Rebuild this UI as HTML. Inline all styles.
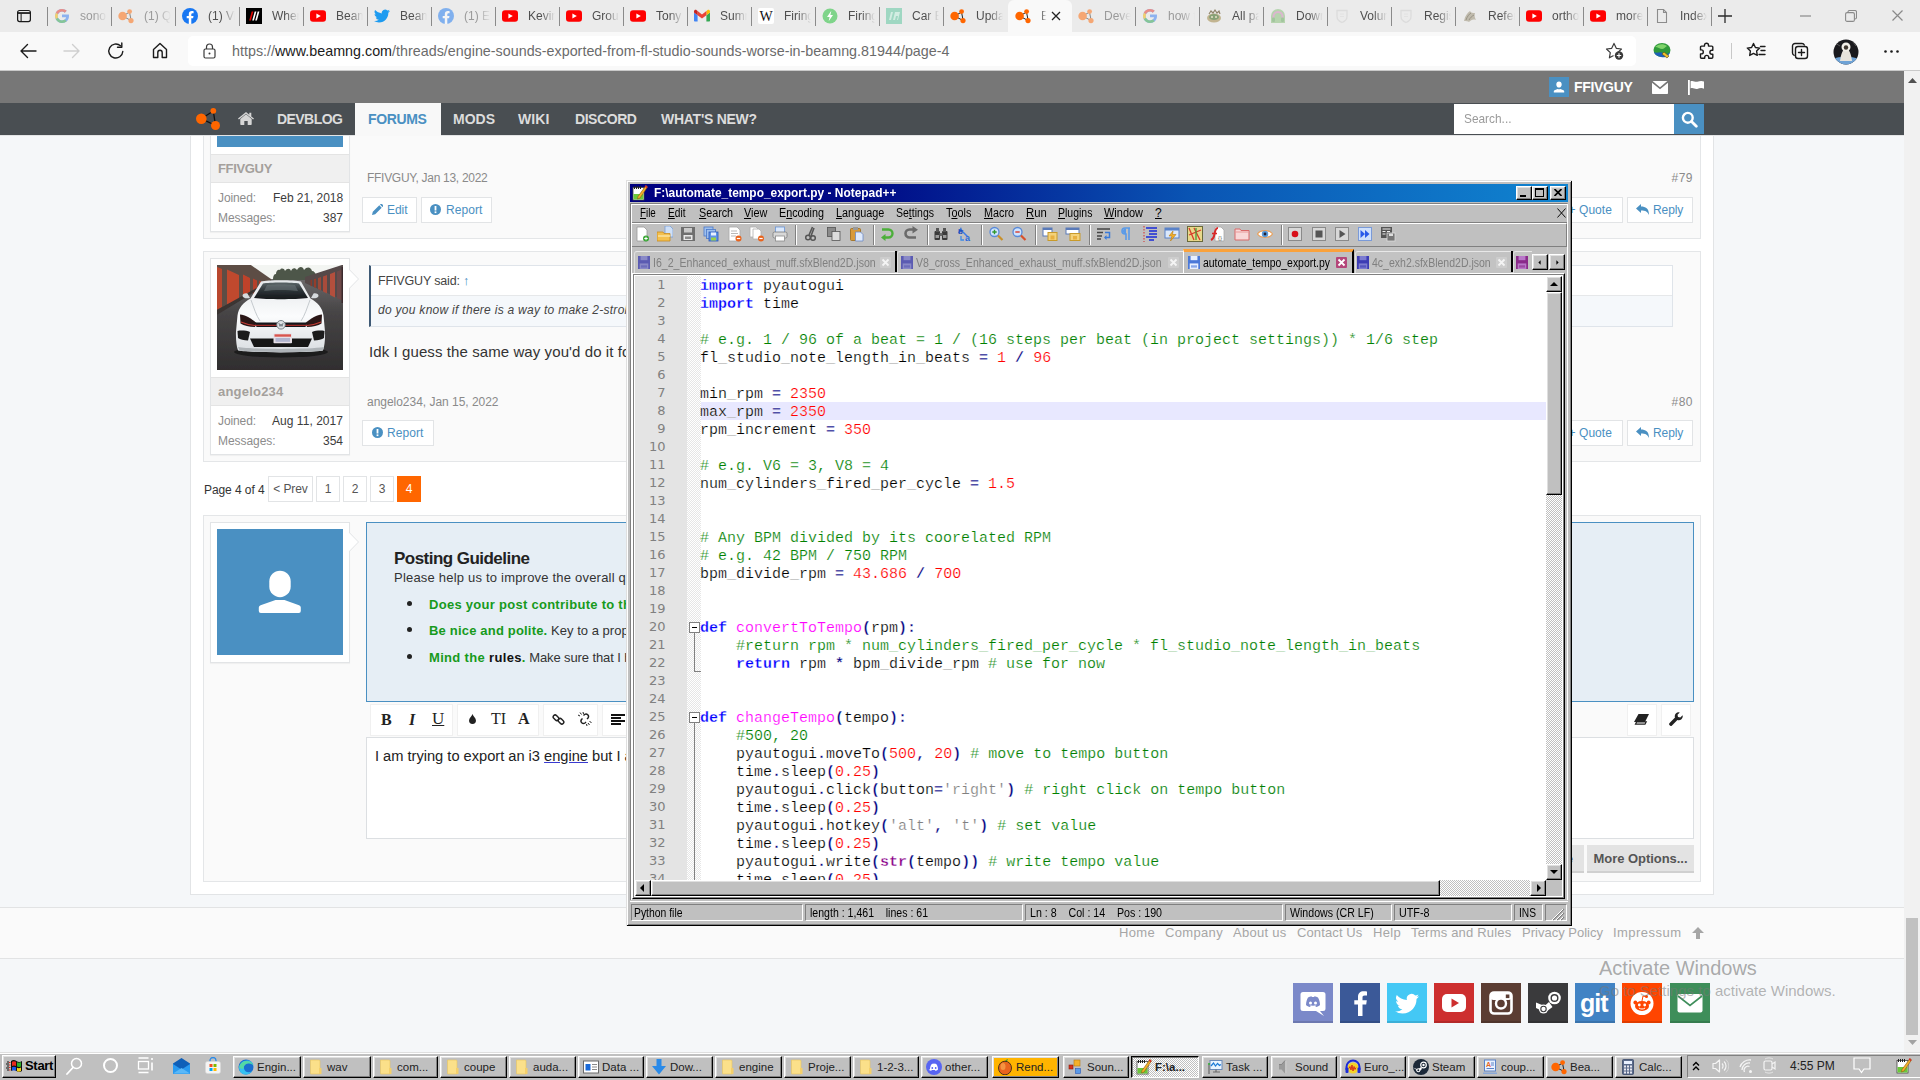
<!DOCTYPE html>
<html lang="en">
<head>
<meta charset="utf-8">
<title>Engine sounds exported from FL Studio sounds worse in BeamNG</title>
<style>
*{box-sizing:border-box}
html,body{margin:0;padding:0}
body{width:1920px;height:1080px;overflow:hidden;position:relative;background:#f6f7f8;font-family:"Liberation Sans",sans-serif;font-size:13px;color:#222}
.abs{position:absolute}
svg{display:block}
i{display:block;font-style:normal}
.t{white-space:nowrap}
/* ---------- browser chrome ---------- */
#tabbar{position:absolute;left:0;top:0;width:1920px;height:32px;background:#ebebeb;z-index:5}
#tabbar .tab{position:absolute;top:0;height:32px;width:64px;font-size:12px;color:#4f4f4f;white-space:nowrap;overflow:hidden}
#tabbar .tab .ic{position:absolute;left:7px;top:8px;width:16px;height:16px}
#tabbar .tab .tt{position:absolute;left:33px;top:7px;width:27px;overflow:hidden;line-height:18px;-webkit-mask-image:linear-gradient(90deg,#000 50%,transparent 100%);mask-image:linear-gradient(90deg,#000 50%,transparent 100%)}
#tabbar .sep{position:absolute;top:7px;width:1px;height:19px;background:#8a8a8a}
#tabbar .active{background:#f9f9f9;border-radius:6px 6px 0 0}
#addr{position:absolute;left:0;top:32px;width:1920px;height:39px;background:#f9f9f9;border-bottom:1px solid #c9c9c9;z-index:5}
#url{position:absolute;left:188px;top:4px;width:1448px;height:30px;background:#fff;border-radius:5px;font-size:14.300px;line-height:30px;color:#6b6b6b;white-space:nowrap}
#url b{font-weight:normal;color:#1b1b1b}
/* ---------- page ---------- */
#page{position:absolute;left:0;top:0;width:1904px;height:1052px;overflow:hidden;background:#f5f7f9}
#vscroll{position:absolute;left:1904px;top:71px;width:16px;height:981px;background:#f1f1f1}
.nv{top:109px;font-weight:bold;font-size:14px;line-height:20px;color:#dcdcdc;white-space:nowrap}
.post{background:#fafafa;border:1px solid #e4e6e8}
.ubox{background:#fff;border:1px solid #e2e4e6;box-shadow:0 1px 1px rgba(0,0,0,.04)}
.uname{background:#f0f0f0;border-top:1px solid #e4e4e4;border-bottom:1px solid #e4e4e4}
.un{font-weight:bold;font-size:13px;line-height:18px;color:#a4a09c;margin-top:1px}
.ul{font-size:12px;line-height:18px;color:#8c8c8c;margin-top:1px}
.uv{font-size:12px;line-height:18px;color:#3c3c3c;margin-top:1px}
.meta{font-size:12px;line-height:18px;color:#8a8a8a;margin-top:1px}
.btn{height:26px;background:#fff;border:1px solid #e2e4e6}
.bt{font-size:12px;line-height:18px;color:#4a90c2}
.arrow{width:9px;height:18px;background:linear-gradient(#fff,#fff);clip-path:polygon(0 0,100% 50%,0 100%)}
.pn{top:476px;height:26px;background:#fff;border:1px solid #e2e4e6;font-size:12px;line-height:24px;color:#555;text-align:center}
.dot{width:5px;height:5px;border-radius:50%;background:#222}
.gl{font-size:13px;line-height:18px;color:#333}
.gl b{color:#179a1c}
.tbg{top:704px;height:32px;background:#fff;border:1px solid #f0f0f0}
.ser{font-family:"Liberation Serif",serif;font-size:17px;line-height:20px;color:#222}
.gbtn{height:28px;background:#e3e3e3;border-bottom:2px solid #d0d0d0;font-family:"Liberation Sans",sans-serif;font-weight:bold;font-size:13px;line-height:27px;color:#555;text-align:center}
.ft{top:924px;font-size:13px;line-height:18px;color:#a6a6a6}
.soc{top:983px;width:40px;height:40px;overflow:hidden;box-shadow:inset 0 -2px 0 rgba(0,0,0,.12)}

#npp{position:absolute;left:626px;top:180px;width:946px;height:746px;background:#c0c0c0;box-shadow:inset 1px 1px 0 #dfdfdf,inset -1px -1px 0 #000,inset 2px 2px 0 #fff,inset -2px -2px 0 #808080;z-index:4;font-family:"Liberation Sans",sans-serif}
.w95b{background:#c0c0c0;border:1px solid;border-color:#fff #000 #000 #fff;box-shadow:inset -1px -1px 0 #808080,inset 1px 1px 0 #dfdfdf}
.mn{top:2px;font-size:12px;line-height:15px;color:#000}
.itab{height:22px;background:#c3c3c3;border-top:1px solid #e8e8e8;border-left:1px solid #e0e0e0;border-radius:3px 0 0 0}
.tbt{font-size:12px;line-height:16px;margin-top:1px;color:#808080}
#ned{border:1px solid;border-color:#fff #000 #000 #fff;box-shadow:inset 1px 1px 0 #808080,inset -1px -1px 0 #808080,inset 2px 2px 0 #fff,inset -2px -2px 0 #fff;background:#fff;overflow:hidden}
#nedc{left:2px;top:2px;width:911px;height:604px;overflow:hidden;background:#fff}
#foldm{background:#f2f2f2;background-image:conic-gradient(#fff 25%,#e6e6e6 0 50%,#fff 0 75%,#e6e6e6 0);background-size:2px 2px}
.ln{left:0;width:30.500px;text-align:right;font-family:"DejaVu Sans",sans-serif;font-size:13px;line-height:18px;color:#808080}
.cd{left:65px;margin-top:2px;-webkit-text-stroke:.22px #fff;font-family:"Liberation Mono",monospace;font-size:15px;line-height:18px;color:#000;white-space:pre}
.cd .k{color:#0000ff;font-weight:bold;-webkit-text-stroke:.3px #fff}
.cd .n{color:#ff0000}
.cd .c{color:#008000}
.cd .o{color:#000080;font-weight:bold;-webkit-text-stroke:.3px #fff}
.cd .f{color:#ff00ff}
.cd .s{color:#808080}
.cd .b{color:#880088;font-weight:bold;-webkit-text-stroke:.3px #fff}
.chk{background-color:#fff;background-image:conic-gradient(#c0c0c0 25%,#fff 0 50%,#c0c0c0 0 75%,#fff 0);background-size:2px 2px}
.sbp .t{white-space:pre}
.sbp{height:17px;border:1px solid;border-color:#808080 #fff #fff #808080;font-size:12px;line-height:16px;color:#000;padding-left:2px;white-space:pre;overflow:hidden}

#taskbar{position:absolute;left:0;top:1052px;width:1920px;height:28px;background:#c0c0c0;border-top:1px solid #dfdfdf;box-shadow:inset 0 1px 0 #fff;z-index:6;font-family:"Liberation Sans",sans-serif}
#taskbar>*{margin-top:-1px}
.tb{top:4px;height:22px;background:#c0c0c0;border:1px solid;border-color:#fff #000 #000 #fff;box-shadow:inset -1px -1px 0 #808080,inset 1px 1px 0 #dfdfdf;font-size:11.500px;line-height:16px;color:#222;overflow:hidden}
.tbp{border-color:#000 #fff #fff #000;box-shadow:inset 1px 1px 0 #808080;background-color:#fff;background-image:conic-gradient(#c0c0c0 25%,#fff 0 50%,#c0c0c0 0 75%,#fff 0);background-size:2px 2px;font-weight:bold}
#t_un1{letter-spacing:-0.335px}
#t_j1{letter-spacing:-0.100px}
#t_jv1{letter-spacing:-0.061px}
#t_m1{letter-spacing:-0.059px}
#t_mv1{letter-spacing:-0.010px}
#t_meta1{letter-spacing:-0.286px}
#t_edit{letter-spacing:-0.047px}
#t_rep1{letter-spacing:0.078px}
#t_un2{letter-spacing:0.212px}
#t_j2{letter-spacing:-0.100px}
#t_jv2{letter-spacing:0.040px}
#t_m2{letter-spacing:-0.059px}
#t_mv2{letter-spacing:-0.010px}
#t_meta2{letter-spacing:-0.027px}
#t_rep2{letter-spacing:0.078px}
#t_pg{letter-spacing:-0.081px}
#t_prev{letter-spacing:-0.086px}
#t_dev{letter-spacing:-0.562px}
#t_for{letter-spacing:-0.362px}
#t_mods{letter-spacing:0.000px}
#t_wiki{letter-spacing:0.073px}
#t_disc{letter-spacing:-0.438px}
#t_new{letter-spacing:-0.265px}
#t_user{letter-spacing:-0.310px}
#mn0{display:inline-block;transform:scaleX(0.8168);transform-origin:0 0}
#mn1{display:inline-block;transform:scaleX(0.8459);transform-origin:0 0}
#mn2{display:inline-block;transform:scaleX(0.8966);transform-origin:0 0}
#mn3{display:inline-block;transform:scaleX(0.9032);transform-origin:0 0}
#mn4{display:inline-block;transform:scaleX(0.8992);transform-origin:0 0}
#mn5{display:inline-block;transform:scaleX(0.9047);transform-origin:0 0}
#mn6{display:inline-block;transform:scaleX(0.8764);transform-origin:0 0}
#mn7{display:inline-block;transform:scaleX(0.9031);transform-origin:0 0}
#mn8{display:inline-block;transform:scaleX(0.8997);transform-origin:0 0}
#mn9{display:inline-block;transform:scaleX(0.9402);transform-origin:0 0}
#mn10{display:inline-block;transform:scaleX(0.8740);transform-origin:0 0}
#mn11{display:inline-block;transform:scaleX(0.9136);transform-origin:0 0}
#sb0{display:inline-block;transform:scaleX(0.8653);transform-origin:0 0}
#sb1{display:inline-block;transform:scaleX(0.8800);transform-origin:0 0}
#sb2{display:inline-block;transform:scaleX(0.8873);transform-origin:0 0}
#sb3{display:inline-block;transform:scaleX(0.8840);transform-origin:0 0}
#sb4{display:inline-block;transform:scaleX(0.8971);transform-origin:0 0}
#sb5{display:inline-block;transform:scaleX(0.8493);transform-origin:0 0}
#t_tab1{display:inline-block;transform:scaleX(0.8815);transform-origin:0 0}
#t_tab2{display:inline-block;transform:scaleX(0.8794);transform-origin:0 0}
#t_tab3{display:inline-block;transform:scaleX(0.8693);transform-origin:0 0}
#t_tab4{display:inline-block;transform:scaleX(0.8765);transform-origin:0 0}
#t_title{display:inline-block;transform:scaleX(0.9168);transform-origin:0 0}
#t_f1{letter-spacing:0.328px}
#t_f2{letter-spacing:0.337px}
#t_f3{letter-spacing:0.271px}
#t_f4{letter-spacing:0.119px}
#t_f5{letter-spacing:0.312px}
#t_f6{letter-spacing:0.197px}
#t_f7{letter-spacing:0.006px}
#t_f8{letter-spacing:0.467px}
#t_pgl{letter-spacing:-0.536px}
#t_pls{letter-spacing:0.205px}
#t_body{letter-spacing:0.088px}
#t_ed{letter-spacing:-0.014px}
#t_g1 b{letter-spacing:0.279px}
#t_g2 b{letter-spacing:0.186px}
#t_g3 b{letter-spacing:0.331px}
#t_g2{letter-spacing:0.022px}
#t_g3{letter-spacing:-0.107px}
#t_said{letter-spacing:-0.156px}
#t_qt{letter-spacing:0.284px}
#t_search{display:inline-block;transform:scaleX(0.8791);transform-origin:0 0}
#t_n79{letter-spacing:0.456px}
#t_n80{letter-spacing:0.456px}
#t_r1{letter-spacing:-0.077px}
#t_r2{letter-spacing:-0.077px}
#t_q1{letter-spacing:0.067px}
#t_q2{letter-spacing:0.067px}
#t_more{letter-spacing:-0.042px}
#urltxt{letter-spacing:0.014px}
</style>
</head>
<body>
<!-- ================= WEB PAGE ================= -->
<div id="page">
<!-- content wrapper -->
<div class="abs" style="left:190px;top:136px;width:1524px;height:759px;background:#fff;border:1px solid #e2e4e6;border-top:0"></div>

<!-- ===== post #79 (top part scrolled away) ===== -->
<div class="abs post" style="left:203px;top:100px;width:1498px;height:139px"></div>
<div class="abs ubox" style="left:210px;top:100px;width:140px;height:132px"></div>
<div class="abs" style="left:217px;top:136px;width:126px;height:11px;background:#4a90c2"></div>
<div class="abs uname" style="left:211px;top:154px;width:138px;height:29px"></div>
<div class="abs t un" id="t_un1" style="left:218px;top:159px">FFIVGUY</div>
<div class="abs t ul" id="t_j1" style="left:218px;top:188px">Joined:</div>
<div class="abs t uv" id="t_jv1" style="right:1561px;top:188px">Feb 21, 2018</div>
<div class="abs t ul" id="t_m1" style="left:218px;top:208px">Messages:</div>
<div class="abs t uv" id="t_mv1" style="right:1561px;top:208px">387</div>
<div class="abs t meta" id="t_meta1" style="left:367px;top:168px">FFIVGUY, Jan 13, 2022</div>
<div class="abs t meta" id="t_n79" style="right:211px;top:168px">#79</div>
<div class="abs btn" style="left:362px;top:197px;width:55px"></div>
<svg class="abs" style="left:372px;top:204px" width="11" height="11" viewBox="0 0 11 11"><path d="M0 11l.8-3.200L7.300 1.300l2.400 2.400L3.200 10.200zM8 .6L8.600 0c.5-.4 1-.3 1.400.1l.9.900c.4.400.5.900.1 1.400l-.6.600z" fill="#4a90c2"/></svg>
<div class="abs t bt" id="t_edit" style="left:387px;top:201px">Edit</div>
<div class="abs btn" style="left:421px;top:197px;width:71px"></div>
<svg class="abs" style="left:430px;top:204px" width="11" height="11" viewBox="0 0 11 11"><circle cx="5.500" cy="5.500" r="5.500" fill="#4a90c2"/><rect x="4.600" y="2" width="1.800" height="4.500" fill="#fff"/><rect x="4.600" y="7.400" width="1.800" height="1.700" fill="#fff"/></svg>
<div class="abs t bt" id="t_rep1" style="left:446px;top:201px">Report</div>
<div class="abs btn" style="left:1558px;top:197px;width:65px"></div>
<div class="abs t bt" id="t_q1" style="left:1568.500px;top:201px">+ Quote</div>
<div class="abs btn" style="left:1627px;top:197px;width:66px"></div>
<svg class="abs rp" style="left:1636px;top:204px" width="13" height="11" viewBox="0 0 13 11"><path d="M5 0v2.600c4.500 0 8 1.800 8 8.400-1.300-3.200-3.500-4.500-8-4.500V9L0 4.500z" fill="#4a90c2"/></svg>
<div class="abs t bt" id="t_r1" style="left:1653px;top:201px">Reply</div>

<!-- ===== post #80 ===== -->
<div class="abs post" style="left:203px;top:251px;width:1498px;height:211px"></div>
<div class="abs ubox" style="left:210px;top:258px;width:140px;height:197px"></div>
<svg class="abs" style="left:348px;top:269px" width="12" height="20" viewBox="0 0 12 20"><path d="M1 0v.5l9.500 9.500L1 19.500v.5z" fill="#fff"/><path d="M1.500 0v.8l9 9.200-9 9.200v.8" fill="none" stroke="#e2e4e6" stroke-width="1"/></svg>
<!-- avatar: white hatchback between red storage units -->
<svg class="abs" style="left:217px;top:265px" width="126" height="105" viewBox="0 0 126 105">
 <defs>
  <linearGradient id="asp" x1="0" y1="0" x2="0" y2="1"><stop offset="0" stop-color="#6a6869"/><stop offset=".35" stop-color="#474546"/><stop offset="1" stop-color="#2f2d2e"/></linearGradient>
  <linearGradient id="hood" x1="0" y1="0" x2="0" y2="1"><stop offset="0" stop-color="#e4e7ea"/><stop offset=".5" stop-color="#fbfcfd"/><stop offset="1" stop-color="#d9dde1"/></linearGradient>
  <linearGradient id="ws" x1="0" y1="0" x2="0" y2="1"><stop offset="0" stop-color="#5a6468"/><stop offset=".5" stop-color="#2c3236"/><stop offset="1" stop-color="#15181b"/></linearGradient>
  <filter id="bl" x="-5%" y="-5%" width="110%" height="110%"><feGaussianBlur stdDeviation=".55"/></filter>
  <clipPath id="avclip"><rect width="126" height="105"/></clipPath>
 </defs>
 <g clip-path="url(#avclip)"><g filter="url(#bl)">
 <rect x="-2" y="-2" width="130" height="109" fill="#f3f5f2"/>
 <rect x="-2" y="14" width="130" height="93" fill="url(#asp)"/>
 <!-- trees -->
 <path d="M56 14c0-3 1-5 3-5 0-3 2-5 4-4 1-2 4-2 5 1 2-3 5-3 6 0 1-3 4-4 6-1 2-4 6-4 7 0 3-4 7-3 8 1 2 0 4 2 4 5v4H56z" fill="#4e5748"/>
 <!-- left units -->
 <path d="M-2 -2H31L54 14v2L-2 49z" fill="#5d4e45"/>
 <path d="M-2 1L5 4V42L-2 46z" fill="#b9462e"/>
 <path d="M10 4.500L22 10V35.500L10 41z" fill="#c0492f"/>
 <path d="M26 9.500L33 13V30L26 33.500z" fill="#bf432b"/>
 <path d="M36 13.500L40 15.500V27L36 29z" fill="#b5412b"/>
 <path d="M42 15.500L45 17V24.500L42 26z" fill="#a83f2b"/>
 <path d="M47 17L49.500 18V22.500L47 23.500z" fill="#9a3d2b"/>
 <path d="M-2 46L54 15v2L-2 51z" fill="#3a3433"/>
 <!-- right units -->
 <path d="M128 -1L88 12v6l40 18z" fill="#54484a"/>
 <path d="M126 4L120 6.500V33L126 36z" fill="#6e4a48"/><path d="M124.500 2v36h2V2z" fill="#3a2c2e"/>
 <path d="M118 7L113 9V30L118 32.500z" fill="#b4503c"/>
 <path d="M110 10L106 11.500V26.500L110 28.500z" fill="#a84c3a"/>
 <path d="M104 12L101 13V24L104 25.500z" fill="#9a4838"/>
 <path d="M99 13.500L97 14.300V22L99 23z" fill="#963c2b"/>
 <path d="M95 14.500L93.500 15V20.500L95 21.200z" fill="#8a3a2a"/>
 <!-- car shadow -->
 <ellipse cx="64" cy="87" rx="47" ry="5.500" fill="#1c1b1c"/>
 <!-- body -->
 <path d="M44 16.500c6-1.600 34-1.600 40 0l9.500 17c7 4 12 9 13 17l1.500 16c.3 8-.5 15-2 19-14 2.500-71 2.500-85 0-1.500-4-2.300-11-2-19l1.500-16c1-8 6-13 13-17z" fill="url(#hood)"/>
 <path d="M46 18.500c6-1.300 30-1.300 36 0l9 14.500c-14 1.600-40 1.600-54 0z" fill="url(#ws)"/>
 <path d="M50 20c8-1 20-1 28 0l3 6c-10-1.500-24-1.500-34 0z" fill="#6e787c" opacity=".55"/>
 <!-- mirrors -->
 <path d="M25.500 31c0-2 2-3 5-2.500l2.500 4.500c-3 .8-7 .3-7.500-2z" fill="#d6dadd"/>
 <path d="M101.500 31c0-2-2-3-5-2.500L94 33c3 .8 7 .3 7.500-2z" fill="#d6dadd"/>
 <!-- hood creases -->
 <path d="M34 35c3 8 5 15 9 21M93 35c-3 8-5 15-9 21" fill="none" stroke="#c5cace" stroke-width="1"/>
 <!-- headlights -->
 <path d="M23 49.500c5 .5 11 3.500 16.500 8.500L38 62c-6-.3-11-1.300-14.500-3.500z" fill="#2a1718"/>
 <path d="M105 49.500c-5 .5-11 3.500-16.500 8.500L90 62c6-.3 11-1.300 14.500-3.500z" fill="#2a1718"/>
 <path d="M24 57c4 1.800 9 3 14 3.500M104 57c-4 1.800-9 3-14 3.500" fill="none" stroke="#c03a33" stroke-width="1.200"/>
 <!-- grille -->
 <path d="M38 57.500h52l-1.500 4.500h-49z" fill="#17181a"/>
 <path d="M38 60.300h52" stroke="#c4312c" stroke-width="1"/>
 <circle cx="64" cy="59.800" r="4.300" fill="#dfe3e6" stroke="#6e767c" stroke-width=".9"/>
 <path d="M61.800 57.800l1.200 3.600 1-2.400 1 2.400 1.200-3.600" fill="none" stroke="#5d666d" stroke-width=".8"/>
 <!-- intakes -->
 <path d="M20.500 66c4-.8 9-.3 12.500 1l-2 8.500c-4 0-8-1-10-2.500z" fill="#1b1b1d"/>
 <path d="M107.500 66c-4-.8-9-.3-12.500 1l2 8.500c4 0 8-1 10-2.500z" fill="#1b1b1d"/>
 <path d="M33 73.500h62l-4 8.500H37z" fill="#151617"/>
 <!-- plate -->
 <rect x="56.500" y="68.500" width="18.500" height="9.800" rx=".8" fill="#e6dfe6"/>
 <rect x="57.500" y="69.300" width="16.500" height="2.400" fill="#d9544d"/>
 <rect x="58.500" y="73" width="14.500" height="3.800" fill="#9aa3c4" opacity=".7"/>
 <!-- splitter -->
 <path d="M21 82c14 2.500 72 2.500 86 0l-1.500 3.500c-14 2.300-69 2.300-83 0z" fill="#aeb3b7"/>
 </g></g>
</svg>
<div class="abs uname" style="left:211px;top:377px;width:138px;height:29px"></div>
<div class="abs t un" id="t_un2" style="left:218px;top:382px">angelo234</div>
<div class="abs t ul" id="t_j2" style="left:218px;top:411px">Joined:</div>
<div class="abs t uv" id="t_jv2" style="right:1561px;top:411px">Aug 11, 2017</div>
<div class="abs t ul" id="t_m2" style="left:218px;top:431px">Messages:</div>
<div class="abs t uv" id="t_mv2" style="right:1561px;top:431px">354</div>
<!-- quote -->
<div class="abs" style="left:369px;top:265px;width:1304px;height:62px;border:1px solid #dfe4ea;border-left:2px solid #3f5a75;background:#f5f8fb"></div>
<div class="abs" style="left:371px;top:266px;width:1301px;height:30px;background:#fff;border-bottom:1px solid #e6e8ea"></div>
<div class="abs t" id="t_said" style="left:378px;top:272px;font-size:12.500px;line-height:18px;color:#444">FFIVGUY said: <span style="color:#4a90c2">↑</span></div>
<div class="abs t" id="t_qt" style="left:378px;top:301px;font-size:12px;line-height:18px;font-style:italic;color:#444">do you know if there is a way to make 2-stroke engine sounds in FL Studio?</div>
<div class="abs t" id="t_body" style="left:369px;top:342px;font-size:15px;line-height:20px;color:#333">Idk I guess the same way you'd do it for a 4-stroke, just change the number of cylinders fired per cycle</div>
<div class="abs t meta" id="t_meta2" style="left:367px;top:392px">angelo234, Jan 15, 2022</div>
<div class="abs t meta" id="t_n80" style="right:211px;top:392px">#80</div>
<div class="abs btn" style="left:362px;top:420px;width:72px"></div>
<svg class="abs" style="left:372px;top:427px" width="11" height="11" viewBox="0 0 11 11"><circle cx="5.500" cy="5.500" r="5.500" fill="#4a90c2"/><rect x="4.600" y="2" width="1.800" height="4.500" fill="#fff"/><rect x="4.600" y="7.400" width="1.800" height="1.700" fill="#fff"/></svg>
<div class="abs t bt" id="t_rep2" style="left:387px;top:424px">Report</div>
<div class="abs btn" style="left:1558px;top:420px;width:65px"></div>
<div class="abs t bt" id="t_q2" style="left:1568.500px;top:424px">+ Quote</div>
<div class="abs btn" style="left:1627px;top:420px;width:66px"></div>
<svg class="abs rp" style="left:1636px;top:427px" width="13" height="11" viewBox="0 0 13 11"><path d="M5 0v2.600c4.500 0 8 1.800 8 8.400-1.300-3.200-3.500-4.500-8-4.500V9L0 4.500z" fill="#4a90c2"/></svg>
<div class="abs t bt" id="t_r2" style="left:1653px;top:424px">Reply</div>

<!-- pagination -->
<div class="abs t" id="t_pg" style="left:204px;top:481px;font-size:12px;line-height:18px;color:#333">Page 4 of 4</div>
<div class="abs pn" style="left:268px;width:45px"><span class="t" id="t_prev">&lt; Prev</span></div>
<div class="abs pn" style="left:316px;width:24px"><span class="t">1</span></div>
<div class="abs pn" style="left:343px;width:24px"><span class="t">2</span></div>
<div class="abs pn" style="left:370px;width:24px"><span class="t">3</span></div>
<div class="abs pn" style="left:397px;width:24px;background:#ff6600;border-color:#ff6600;color:#fff"><span class="t">4</span></div>

<!-- ===== quick reply ===== -->
<div class="abs post" style="left:203px;top:515px;width:1498px;height:367px"></div>
<div class="abs ubox" style="left:210px;top:522px;width:140px;height:141px"></div>
<svg class="abs" style="left:348px;top:532px" width="12" height="20" viewBox="0 0 12 20"><path d="M1 0v.5l9.500 9.500L1 19.500v.5z" fill="#fff"/><path d="M1.500 0v.8l9 9.200-9 9.200v.8" fill="none" stroke="#e2e4e6" stroke-width="1"/></svg>
<div class="abs" style="left:217px;top:529px;width:126px;height:126px;background:#4a90c2">
 <svg class="abs" style="left:42px;top:42px;overflow:visible" width="43" height="43" viewBox="0 0 43 43"><rect x="10.300" y="-.3" width="21.400" height="26.500" rx="10.700" fill="#fff"/><path d="M16.500 29h9l14.500 5.300c1.200.5 1.800 1.300 1.800 2.500v3.200a2 2 0 0 1-2 2H1.800a2 2 0 0 1-2-2v-3.200c0-1.200.6-2 1.800-2.500z" fill="#fff"/></svg>
</div>
<div class="abs" style="left:366px;top:522px;width:1328px;height:180px;background:#e6eef5;border:1px solid #4a90c2"></div>
<div class="abs t" id="t_pgl" style="left:394px;top:548px;font-size:17px;line-height:22px;font-weight:bold;color:#222">Posting Guideline</div>
<div class="abs t" id="t_pls" style="left:394px;top:569px;font-size:13px;line-height:18px;color:#333">Please help us to improve the overall quality of the forums by following these simple guidelines:</div>
<i class="abs dot" style="left:407px;top:601px"></i>
<i class="abs dot" style="left:407px;top:627px"></i>
<i class="abs dot" style="left:407px;top:654px"></i>
<div class="abs t gl" id="t_g1" style="left:429px;top:596px"><b>Does your post contribute to the discussion?</b> Make sure it adds value to the thread.</div>
<div class="abs t gl" id="t_g2" style="left:429px;top:622px"><b>Be nice and polite.</b> Key to a proper discussion is respect for other members.</div>
<div class="abs t gl" id="t_g3" style="left:429px;top:649px"><b>Mind the <span style="color:#111">rules</span>.</b> Make sure that I have read and understood the forum rules.</div>
<!-- editor toolbar -->
<div class="abs" style="left:366px;top:702px;width:1328px;height:36px;background:#fafafa"></div>
<div class="abs tbg" style="left:370px;width:83px"></div>
<div class="abs tbg" style="left:457px;width:82px"></div>
<div class="abs tbg" style="left:543px;width:55px"></div>
<div class="abs tbg" style="left:602px;width:40px"></div>
<div class="abs tbg" style="left:1627px;width:30px"></div>
<div class="abs tbg" style="left:1661px;width:30px"></div>
<div class="abs t ser" style="left:381px;top:710px;font-weight:bold;font-size:16px">B</div>
<div class="abs t ser" style="left:409px;top:710px;font-style:italic;font-weight:bold;font-size:16px">I</div>
<div class="abs t ser" style="left:432px;top:709px;text-decoration:underline;font-size:17px">U</div>
<svg class="abs" style="left:469px;top:714px" width="7" height="10" viewBox="0 0 9 13"><path d="M4.500 0C5.500 3 9 5.500 9 8.500a4.500 4.500 0 0 1-9 0C0 5.500 3.500 3 4.500 0z" fill="#222"/></svg>
<div class="abs t ser" style="left:491px;top:709px;font-weight:normal;font-size:16px">TI</div>
<div class="abs t ser" style="left:518px;top:709px;font-weight:bold;font-size:16px">A</div>
<svg class="abs" style="left:552px;top:713px" width="13" height="13" viewBox="0 0 15 15"><g fill="none" stroke="#222" stroke-width="1.700"><rect x="1" y="3.300" width="7.200" height="4.400" rx="2.200" transform="rotate(45 4.600 5.500)"/><rect x="6.800" y="7.300" width="7.200" height="4.400" rx="2.200" transform="rotate(45 10.400 9.500)"/></g></svg>
<svg class="abs" style="left:577px;top:711px" width="16" height="16" viewBox="0 0 16 16"><g fill="none" stroke="#222" stroke-width="1.400"><path d="M6.500 4.500l1-1a2.500 2.500 0 0 1 3.500 3.500l-1 1M9 11l-1 1a2.500 2.500 0 0 1-3.500-3.500l1-1"/><path d="M3 1.500l1.500 2M1 4l2 1M12.500 14l-1.500-2M14.500 11.500l-2-1M6 1l.5 2M10 15l-.5-2" stroke-width="1"/></g></svg>
<svg class="abs" style="left:611px;top:714px" width="14" height="11" viewBox="0 0 14 11"><path d="M0 1h14M0 4h10M0 7h14M0 10h10" stroke="#111" stroke-width="1.900"/></svg>
<svg class="abs" style="left:1634px;top:714px" width="15" height="11" viewBox="0 0 15 11"><path d="M4.500 0H15l-4 8H0z" fill="#222"/><path d="M1.500 10.200h9.500l1.200-2.400H2.700z" fill="none" stroke="#222" stroke-width="1.200"/></svg>
<svg class="abs" style="left:1669px;top:712px" width="14" height="14" viewBox="0 0 14 14"><path d="M13.600 3.200l-2.300 2.300-2.300-.5-.5-2.300L10.800.4A4 4 0 0 0 6 5.600L.6 11a1.700 1.700 0 0 0 2.400 2.400L8.400 8a4 4 0 0 0 5.200-4.800z" fill="#222"/></svg>
<!-- editor -->
<div class="abs" style="left:366px;top:737px;width:1328px;height:102px;background:#fff;border:1px solid #dcdfe2"></div>
<div class="abs t" id="t_ed" style="left:375px;top:746px;font-family:'Liberation Sans',sans-serif;font-size:14.670px;line-height:20px;color:#222">I am trying to export an i3 <span style="text-decoration:underline;text-decoration-color:#3a3ad0">engine</span> but I am not sure how to do it properly</div>
<div class="abs gbtn" style="left:1478px;top:845px;width:106px;text-align:right;padding-right:11px"><span class="t">Upload a File</span></div>
<div class="abs gbtn" style="left:1587px;top:845px;width:107px"><span class="t" id="t_more">More Options...</span></div>

<!-- footer -->
<div class="abs" style="left:0;top:907px;width:1904px;height:52px;background:#fafafa;border-top:1px solid #e2e3e4;border-bottom:1px solid #e2e3e4"></div>
<div class="abs t ft" id="t_f1" style="left:1119px">Home</div>
<div class="abs t ft" id="t_f2" style="left:1165px">Company</div>
<div class="abs t ft" id="t_f3" style="left:1233px">About us</div>
<div class="abs t ft" id="t_f4" style="left:1297px">Contact Us</div>
<div class="abs t ft" id="t_f5" style="left:1373px">Help</div>
<div class="abs t ft" id="t_f6" style="left:1411px">Terms and Rules</div>
<div class="abs t ft" id="t_f7" style="left:1522px">Privacy Policy</div>
<div class="abs t ft" id="t_f8" style="left:1613px">Impressum</div>
<svg class="abs" style="left:1692px;top:927px" width="12" height="12" viewBox="0 0 12 12"><path d="M6 0l6 6H8v6H4V6H0z" fill="#a6a6a6"/></svg>

<!-- header strips -->
<div class="abs" style="left:0;top:71px;width:1904px;height:32px;background:#777"></div>
<div class="abs" style="left:0;top:103px;width:1904px;height:32px;background:#494e52"></div>
<div class="abs" style="left:0;top:135px;width:1904px;height:1px;background:#e3e4e5"></div>
<!-- visitor tabs -->
<div class="abs" style="left:1549px;top:77px;width:20px;height:20px;background:#4a90c2">
 <svg class="abs" style="left:4px;top:4px" width="12" height="12" viewBox="0 0 12 12"><path d="M6 .5c1.600 0 2.700 1.200 2.700 2.900S7.500 6.600 6 6.600 3.300 5.100 3.300 3.400 4.400.5 6 .5zM.8 11.500v-1.300c0-.5.200-.8.700-1L4.600 7.900c.9.500 1.900.5 2.800 0l3.100 1.300c.5.200.7.500.7 1v1.300z" fill="#fff"/></svg>
</div>
<div class="abs t" id="t_user" style="left:1574px;top:78px;font-weight:bold;font-size:14px;line-height:18px;color:#fff">FFIVGUY</div>
<svg class="abs" style="left:1652px;top:81px" width="16" height="13" viewBox="0 0 16 13"><path d="M0 1.800V12c0 .6.400 1 1 1h14c.6 0 1-.4 1-1V1.800L8 8.300z" fill="#fff"/><path d="M.6 0h14.800L8 6.300z" fill="#fff"/></svg>
<svg class="abs" style="left:1688px;top:80px" width="16" height="15" viewBox="0 0 16 15"><rect x="0" y="0" width="1.800" height="15" fill="#fff"/><path d="M2.600 1.300c2.200-1.300 4.300.9 6.600.4C11.400 1.200 13.400.3 16 1.500v7.200c-2.600-1.200-4.600-.3-6.800.2-2.300.5-4.400-1.700-6.600-.4z" fill="#fff"/></svg>

<!-- main nav -->
<svg class="abs" style="left:195px;top:107px" width="28" height="25" viewBox="0 0 28 25"><path d="M6.300 11.700L18.300 4 20.500 18.500z" fill="none" stroke="#111" stroke-width="1.300"/><circle cx="6.300" cy="11.700" r="5.300" fill="#ff6600"/><circle cx="18.300" cy="3.800" r="2.900" fill="#ff6600"/><circle cx="20.500" cy="18.500" r="4.500" fill="#ff6600"/></svg>
<svg class="abs" style="left:238px;top:112px" width="16" height="13" viewBox="0 0 16 13"><path d="M8 2.300l5.700 4.700v5.300c0 .4-.3.700-.7.700H9.700V9H6.300v4H3c-.4 0-.7-.3-.7-.7V7z" fill="#d6d6d6"/><path d="M8 0l3.300 2.700V.8h2v3.600L16 6.600l-.9 1L8 1.800.9 7.600l-.9-1z" fill="#d6d6d6"/></svg>
<div class="abs nv" id="t_dev" style="left:277px">DEVBLOG</div>
<div class="abs" style="left:355px;top:103px;width:86px;height:33px;background:#f8f8f8"></div>
<div class="abs nv" id="t_for" style="left:368px;color:#4a90c2">FORUMS</div>
<div class="abs nv" id="t_mods" style="left:453px">MODS</div>
<div class="abs nv" id="t_wiki" style="left:518px">WIKI</div>
<div class="abs nv" id="t_disc" style="left:575px">DISCORD</div>
<div class="abs nv" id="t_new" style="left:661px">WHAT'S NEW?</div>
<div class="abs" style="left:1454px;top:104px;width:220px;height:30px;background:#fff"></div>
<div class="abs t" id="t_search" style="left:1464px;top:110px;font-size:13.500px;line-height:18px;color:#9a9a9a">Search...</div>
<div class="abs" style="left:1674px;top:104px;width:30px;height:30px;background:#4a90c2">
 <svg class="abs" style="left:7px;top:7px" width="17" height="17" viewBox="0 0 17 17"><circle cx="6.800" cy="6.800" r="4.900" fill="none" stroke="#fff" stroke-width="2.400"/><path d="M10.500 10.500l4.800 4.800" stroke="#fff" stroke-width="2.800" stroke-linecap="round"/></svg>
</div>

<!-- social buttons -->
<div class="abs soc" style="left:1293px;background:#7b89c9"><svg width="40" height="40" viewBox="0 0 40 40"><path d="M10 9h20a2.500 2.500 0 0 1 2.500 2.500v14A2.500 2.500 0 0 1 30 28h-3l4 5-8-5H10a2.500 2.500 0 0 1-2.500-2.500v-14A2.500 2.500 0 0 1 10 9z" fill="#fff"/><path d="M13 22c0-3 1-6 2-7.500 1-.8 2.300-1.200 3.500-1.300l.4.800h2.200l.4-.8c1.200.1 2.500.5 3.500 1.300 1 1.500 2 4.500 2 7.500-1 1.200-2.500 1.800-4 2l-.8-1.300c.5-.2 1-.5 1.400-.8-2.300 1-5 1-7.200 0 .4.300.9.600 1.400.8L17 24c-1.500-.2-3-.8-4-2z" fill="#7b89c9"/><circle cx="17.500" cy="20" r="1.500" fill="#fff"/><circle cx="22.500" cy="20" r="1.500" fill="#fff"/></svg></div>
<div class="abs soc" style="left:1340px;background:#3b5998"><svg width="40" height="40" viewBox="0 0 40 40"><path d="M22.500 33V21.500h3.700l.6-4.300h-4.300v-2.700c0-1.300.4-2.100 2.200-2.100H27V8.500c-.4-.1-1.800-.2-3.400-.2-3.300 0-5.600 2-5.600 5.700v3.200h-3.700v4.300H18V33z" fill="#fff"/></svg></div>
<div class="abs soc" style="left:1387px;background:#44c8f5"><svg width="40" height="40" viewBox="0 0 40 40"><path d="M32 13.300c-.9.400-1.800.7-2.800.8 1-.6 1.800-1.600 2.200-2.700-1 .6-2 1-3.100 1.200a4.900 4.900 0 0 0-8.400 4.500c-4.100-.2-7.700-2.200-10.100-5.100a4.900 4.900 0 0 0 1.500 6.500c-.8 0-1.600-.2-2.200-.6 0 2.400 1.700 4.400 3.900 4.800-.7.200-1.500.2-2.200.1.600 1.900 2.400 3.400 4.600 3.400A9.900 9.900 0 0 1 8 28.300a13.900 13.900 0 0 0 7.500 2.200c9 0 14-7.500 14-14v-.6c1-.7 1.800-1.600 2.500-2.600z" fill="#fff"/></svg></div>
<div class="abs soc" style="left:1434px;background:#cd2f2f"><svg width="40" height="40" viewBox="0 0 40 40"><rect x="8" y="11" width="24" height="18" rx="5" fill="#fff"/><path d="M17.500 15.500v9l7.500-4.500z" fill="#cd2f2f"/></svg></div>
<div class="abs soc" style="left:1481px;background:#5b3d33"><svg width="40" height="40" viewBox="0 0 40 40"><rect x="9.500" y="9.500" width="21" height="21" rx="3.500" fill="none" stroke="#fff" stroke-width="2.600"/><rect x="9.500" y="9.500" width="21" height="7.500" rx="3" fill="#fff"/><circle cx="20" cy="20.500" r="5" fill="#5b3d33" stroke="#fff" stroke-width="2.400"/><rect x="24.800" y="11.500" width="3.600" height="3.600" fill="#5b3d33"/></svg></div>
<div class="abs soc" style="left:1528px;background:#3a3a3c"><svg width="40" height="40" viewBox="0 0 40 40"><circle cx="26.500" cy="15" r="6.300" fill="#fff"/><circle cx="26.500" cy="15" r="4" fill="#3a3a3c"/><circle cx="26.500" cy="15" r="2.600" fill="#fff"/><path d="M8 19.500l8.500 3.500 4.500-4 3.500 5-6 4.500-2 .5L8 25z" fill="#fff"/><circle cx="15.500" cy="26" r="4.600" fill="#fff"/><circle cx="15.500" cy="26" r="2.700" fill="none" stroke="#3a3a3c" stroke-width="1.100"/></svg></div>
<div class="abs soc" style="left:1575px;background:#4183c4"><div class="t" style="position:absolute;left:5px;top:6px;font:bold 25px/28px 'Liberation Sans',sans-serif;color:#fff;letter-spacing:-1px">git</div></div>
<div class="abs soc" style="left:1622px;background:#ff4500"><svg width="40" height="40" viewBox="0 0 40 40"><circle cx="20" cy="20.500" r="11.500" fill="#fff"/><ellipse cx="20" cy="23" rx="7" ry="5" fill="#ff4500"/><circle cx="13.300" cy="19.500" r="1.900" fill="#ff4500"/><circle cx="26.700" cy="19.500" r="1.900" fill="#ff4500"/><circle cx="24.500" cy="13.500" r="1.500" fill="#ff4500"/><path d="M20 18l1-5 3.500 .8" fill="none" stroke="#ff4500" stroke-width="1"/><circle cx="17.300" cy="22" r="1.400" fill="#fff"/><circle cx="22.700" cy="22" r="1.400" fill="#fff"/><path d="M17.200 25.200c1.700 1.200 3.900 1.200 5.600 0" fill="none" stroke="#fff" stroke-width="1" stroke-linecap="round"/></svg></div>
<div class="abs soc" style="left:1670px;background:#3e8e5a"><svg width="40" height="40" viewBox="0 0 40 40"><rect x="7.500" y="11" width="25" height="18.500" rx="2" fill="#fff"/><path d="M8 13l12 9.500L32 13" fill="none" stroke="#3e8e5a" stroke-width="1.600"/></svg></div>
<!-- windows watermark -->
<div class="abs t" id="t_aw" style="left:1599px;top:956px;font-family:'Liberation Sans',sans-serif;font-size:20px;line-height:24px;color:rgba(120,120,120,.62)">Activate Windows</div>
<div class="abs t" id="t_aw2" style="left:1599px;top:981px;font-family:'Liberation Sans',sans-serif;font-size:15px;line-height:20px;color:rgba(120,120,120,.55)">Go to Settings to activate Windows.</div>

</div>
<div id="vscroll"><svg class="abs" style="left:4px;top:7px" width="9" height="5" viewBox="0 0 9 5"><path d="M0 5h9L4.500 0z" fill="#505050"/></svg><i class="abs" style="left:2px;top:847px;width:12px;height:117px;background:#c1c1c1"></i><svg class="abs" style="left:4px;top:969px" width="9" height="5" viewBox="0 0 9 5"><path d="M0 0h9L4.500 5z" fill="#a3a3a3"/></svg></div>
<!-- ================= BROWSER TAB STRIP ================= -->
<div id="tabbar">
<svg class="abs" style="left:16px;top:9px" width="16" height="14" viewBox="0 0 18 16"><rect x="1.700" y="1.700" width="14.600" height="12.600" rx="2.300" fill="none" stroke="#1b1b1b" stroke-width="1.400"/><path d="M2 4.600h14" stroke="#1b1b1b" stroke-width="2"/><path d="M5.700 5v9" stroke="#1b1b1b" stroke-width="1.200"/></svg>
<div class="tab" style="left:47px"><span class="ic" style="opacity:0.55"><svg width="16" height="16" viewBox="0 0 16 16" style=""><path d="M8 6.6h6.9c.1.5.1.9.1 1.5 0 4-2.7 6.9-7 6.900A7 7 0 1 1 8 1c1.900 0 3.500.7 4.700 1.800l-2 1.900C10 4 9.100 3.600 8 3.600a4.400 4.400 0 1 0 0 8.800c2.300 0 3.700-1.300 4.100-3.200H8z" fill="#4285f4"/><path d="M1.800 4.700A7 7 0 0 1 8 1c1.900 0 3.500.7 4.700 1.800l-2 1.900C10 4 9.100 3.600 8 3.600c-1.800 0-3.300 1-4 2.600z" fill="#ea4335"/><path d="M1.800 4.700l2.200 1.500a4.400 4.400 0 0 0 0 3.600l-2.200 1.500a7 7 0 0 1 0-6.600z" fill="#fbbc05"/><path d="M1.800 11.300L4 9.800c.7 1.600 2.200 2.600 4 2.600 1.100 0 2-.3 2.700-.8l2.100 1.700A7 7 0 0 1 8 15a7 7 0 0 1-6.200-3.700z" fill="#34a853"/></svg></span><span class="tt" style="color:#9a9a9a">sono</span></div>
<div class="tab" style="left:111px"><span class="ic" style="opacity:0.5"><svg width="16" height="16" viewBox="0 0 16 16" style=""><path d="M4.500 8L11.500 4.200 13.200 12.600z" fill="none" stroke="#222" stroke-width="1"/><circle cx="4.600" cy="8" r="4.300" fill="#ff6600"/><circle cx="11.600" cy="3.600" r="2.400" fill="#ff6600"/><circle cx="13" cy="12.600" r="2.600" fill="#ff6600"/></svg></span><span class="tt" style="color:#9a9a9a">(1) Q</span></div>
<div class="tab" style="left:175px"><span class="ic" style="opacity:1"><svg width="16" height="16" viewBox="0 0 16 16" style=""><circle cx="8" cy="8" r="8" fill="#1877f2"/><path d="M11.100 10.300l.4-2.300H9.300V6.500c0-.6.300-1.200 1.300-1.200h1V3.300s-.9-.2-1.800-.2C8 3.100 6.800 4.200 6.800 6.200V8H4.700v2.300h2.100v5.600a8 8 0 0 0 2.500 0v-5.600z" fill="#fff"/></svg></span><span class="tt" style="">(1) Vi</span></div>
<div class="tab" style="left:239px"><span class="ic" style="opacity:1"><svg width="16" height="16" viewBox="0 0 16 16" style=""><rect width="16" height="16" fill="#000"/><path d="M3.200 12.500L5.700 3.500h1.700L4.900 12.500z" fill="#e10600"/><path d="M6.200 12.500L8.700 3.500h1.700L7.900 12.500zM9.200 12.500L11.700 3.500h1.700L10.900 12.500z" fill="#fff"/></svg></span><span class="tt" style="">Wher</span></div>
<div class="tab" style="left:303px"><span class="ic" style="opacity:1"><svg width="16" height="16" viewBox="0 0 16 16" style=""><rect x="0" y="2.300" width="16" height="11.400" rx="3" fill="#ff0000"/><path d="M6.400 5.500v5l4.400-2.500z" fill="#fff"/></svg></span><span class="tt" style="">Beam</span></div>
<div class="tab" style="left:367px"><span class="ic" style="opacity:1"><svg width="16" height="16" viewBox="0 0 16 16" style=""><path d="M16 3c-.6.300-1.200.5-1.900.5.700-.4 1.200-1 1.400-1.800-.6.400-1.300.6-2.100.8A3.300 3.300 0 0 0 7.800 5.500 9.300 9.300 0 0 1 1.100 2.100a3.300 3.300 0 0 0 1 4.400c-.5 0-1-.2-1.500-.4 0 1.600 1.100 2.900 2.600 3.200-.5.100-1 .2-1.500.1a3.300 3.300 0 0 0 3.100 2.300A6.600 6.600 0 0 1 0 13a9.300 9.300 0 0 0 5 1.500c6 0 9.300-5 9.300-9.300v-.4c.7-.5 1.200-1.100 1.700-1.800z" fill="#1d9bf0"/></svg></span><span class="tt" style="">Beam</span></div>
<div class="tab" style="left:431px"><span class="ic" style="opacity:0.5"><svg width="16" height="16" viewBox="0 0 16 16" style=""><circle cx="8" cy="8" r="8" fill="#1877f2"/><path d="M11.100 10.300l.4-2.300H9.300V6.500c0-.6.300-1.200 1.300-1.200h1V3.300s-.9-.2-1.800-.2C8 3.100 6.800 4.200 6.800 6.200V8H4.700v2.300h2.100v5.600a8 8 0 0 0 2.500 0v-5.600z" fill="#fff"/></svg></span><span class="tt" style="color:#9a9a9a">(1) Ev</span></div>
<div class="tab" style="left:495px"><span class="ic" style="opacity:1"><svg width="16" height="16" viewBox="0 0 16 16" style=""><rect x="0" y="2.300" width="16" height="11.400" rx="3" fill="#ff0000"/><path d="M6.400 5.500v5l4.400-2.500z" fill="#fff"/></svg></span><span class="tt" style="">Kevin</span></div>
<div class="tab" style="left:559px"><span class="ic" style="opacity:1"><svg width="16" height="16" viewBox="0 0 16 16" style=""><rect x="0" y="2.300" width="16" height="11.400" rx="3" fill="#ff0000"/><path d="M6.400 5.500v5l4.400-2.500z" fill="#fff"/></svg></span><span class="tt" style="">Grou</span></div>
<div class="tab" style="left:623px"><span class="ic" style="opacity:1"><svg width="16" height="16" viewBox="0 0 16 16" style=""><rect x="0" y="2.300" width="16" height="11.400" rx="3" fill="#ff0000"/><path d="M6.400 5.500v5l4.400-2.500z" fill="#fff"/></svg></span><span class="tt" style="">Tony</span></div>
<div class="tab" style="left:687px"><span class="ic" style="opacity:1"><svg width="16" height="16" viewBox="0 0 16 16" style=""><path d="M1 13.500h2.600V7.300L0 4.600v7.800c0 .6.500 1.100 1 1.100z" fill="#4285f4"/><path d="M12.400 13.500H15c.6 0 1-.5 1-1.100V4.600l-3.600 2.700z" fill="#34a853"/><path d="M12.400 3.100v4.200L16 4.600V3.500c0-1.400-1.500-2.100-2.600-1.300z" fill="#fbbc04"/><path d="M3.600 7.300V3.100L8 6.400l4.400-3.300v4.200L8 10.600z" fill="#ea4335"/><path d="M0 3.500v1.100l3.600 2.700V3.100l-1-.9C1.500 1.400 0 2.100 0 3.500z" fill="#c5221f"/></svg></span><span class="tt" style="">Sumr</span></div>
<div class="tab" style="left:751px"><span class="ic" style="opacity:1"><svg width="16" height="16" viewBox="0 0 16 16" style=""><rect width="16" height="16" rx="2" fill="#fff"/><text x="8" y="13" text-anchor="middle" font-family="Liberation Serif,serif" font-size="14" fill="#111">W</text></svg></span><span class="tt" style="">Firing</span></div>
<div class="tab" style="left:815px"><span class="ic" style="opacity:1"><svg width="16" height="16" viewBox="0 0 16 16" style=""><circle cx="8" cy="8" r="7.500" fill="#7fd48a"/><path d="M9.300 2.800L5 9h2.600l-.9 4.200L11 7H8.400z" fill="#fff"/></svg></span><span class="tt" style="">Firing</span></div>
<div class="tab" style="left:879px"><span class="ic" style="opacity:1"><svg width="16" height="16" viewBox="0 0 16 16" style=""><rect width="16" height="16" fill="#9fd7c2"/><path d="M5 4l-2 8h2l2-8zM9 4l-2 8h2l1-4 2 0-1 4h1l2-8z" fill="#dff3ea" opacity=".8"/></svg></span><span class="tt" style="">Car E</span></div>
<div class="tab" style="left:943px"><span class="ic" style="opacity:1"><svg width="16" height="16" viewBox="0 0 16 16" style=""><path d="M4.500 8L11.500 4.200 13.200 12.600z" fill="none" stroke="#222" stroke-width="1"/><circle cx="4.600" cy="8" r="4.300" fill="#ff6600"/><circle cx="11.600" cy="3.600" r="2.400" fill="#ff6600"/><circle cx="13" cy="12.600" r="2.600" fill="#ff6600"/></svg></span><span class="tt" style="">Upda</span></div>
<div class="tab active" style="left:1007px;left:1008px;width:64px;top:0"><span class="ic" style="opacity:1"><svg width="16" height="16" viewBox="0 0 16 16" style=""><path d="M4.500 8L11.500 4.200 13.200 12.600z" fill="none" stroke="#222" stroke-width="1"/><circle cx="4.600" cy="8" r="4.300" fill="#ff6600"/><circle cx="11.600" cy="3.600" r="2.400" fill="#ff6600"/><circle cx="13" cy="12.600" r="2.600" fill="#ff6600"/></svg></span><span class="tt" style="width:7px;-webkit-mask-image:linear-gradient(90deg,#000 0%,transparent 80%);mask-image:linear-gradient(90deg,#000 0%,transparent 80%)">Engine</span><svg class="abs" style="left:43px;top:11px" width="10" height="10" viewBox="0 0 10 10"><path d="M1 1l8 8M9 1l-8 8" stroke="#222" stroke-width="1.300"/></svg></div>
<div class="tab" style="left:1071px"><span class="ic" style="opacity:0.5"><svg width="16" height="16" viewBox="0 0 16 16" style=""><path d="M4.500 8L11.500 4.200 13.200 12.600z" fill="none" stroke="#222" stroke-width="1"/><circle cx="4.600" cy="8" r="4.300" fill="#ff6600"/><circle cx="11.600" cy="3.600" r="2.400" fill="#ff6600"/><circle cx="13" cy="12.600" r="2.600" fill="#ff6600"/></svg></span><span class="tt" style="color:#9a9a9a">Deve</span></div>
<div class="tab" style="left:1135px"><span class="ic" style="opacity:0.55"><svg width="16" height="16" viewBox="0 0 16 16" style=""><path d="M8 6.6h6.9c.1.5.1.9.1 1.5 0 4-2.7 6.9-7 6.900A7 7 0 1 1 8 1c1.900 0 3.500.7 4.700 1.800l-2 1.900C10 4 9.100 3.600 8 3.600a4.400 4.400 0 1 0 0 8.800c2.300 0 3.700-1.300 4.100-3.200H8z" fill="#4285f4"/><path d="M1.800 4.700A7 7 0 0 1 8 1c1.900 0 3.500.7 4.700 1.800l-2 1.900C10 4 9.100 3.600 8 3.600c-1.800 0-3.300 1-4 2.600z" fill="#ea4335"/><path d="M1.800 4.700l2.200 1.500a4.400 4.400 0 0 0 0 3.600l-2.200 1.500a7 7 0 0 1 0-6.600z" fill="#fbbc05"/><path d="M1.800 11.300L4 9.800c.7 1.600 2.200 2.600 4 2.600 1.100 0 2-.3 2.700-.8l2.100 1.700A7 7 0 0 1 8 15a7 7 0 0 1-6.200-3.700z" fill="#34a853"/></svg></span><span class="tt" style="color:#9a9a9a">how t</span></div>
<div class="tab" style="left:1199px"><span class="ic" style="opacity:1"><svg width="16" height="16" viewBox="0 0 16 16" style="opacity:.8"><ellipse cx="8" cy="10" rx="7" ry="4.500" fill="#b8a77a"/><ellipse cx="8" cy="9" rx="5" ry="3" fill="#6f8f5a"/><path d="M3 6l2-3 2 2 2-3 2 3 2-2 1 3" fill="none" stroke="#7a6a4a" stroke-width="1.200"/><circle cx="6" cy="9" r="1" fill="#e8e0c0"/><circle cx="10" cy="9" r="1" fill="#e8e0c0"/></svg></span><span class="tt" style="">All pa</span></div>
<div class="tab" style="left:1263px"><span class="ic" style="opacity:1"><svg width="16" height="16" viewBox="0 0 16 16" style="opacity:.8"><path d="M1 15V8a7 7 0 0 1 14 0v7z" fill="#a9cfa0"/><path d="M3.500 14V8.500a4.500 4.500 0 0 1 9 0V14" fill="none" stroke="#d9a9c9" stroke-width="2"/><rect x="2" y="9.500" width="3" height="4.500" rx="1" fill="#8fbf8a"/><rect x="11" y="9.500" width="3" height="4.500" rx="1" fill="#8fbf8a"/></svg></span><span class="tt" style="">Down</span></div>
<div class="tab" style="left:1327px"><span class="ic" style="opacity:1"><svg width="16" height="16" viewBox="0 0 16 16" style=""><path d="M3 2.500h10v6c0 3-2.500 5-5 6-2.500-1-5-3-5-6z" fill="none" stroke="#dcdcdc" stroke-width="1.300"/><path d="M6 6h4M6 8.500h4" stroke="#e2e2e2" stroke-width="1"/></svg></span><span class="tt" style="">Volur</span></div>
<div class="tab" style="left:1391px"><span class="ic" style="opacity:1"><svg width="16" height="16" viewBox="0 0 16 16" style=""><path d="M3 2.500h10v6c0 3-2.500 5-5 6-2.500-1-5-3-5-6z" fill="none" stroke="#dcdcdc" stroke-width="1.300"/><path d="M6 6h4M6 8.500h4" stroke="#e2e2e2" stroke-width="1"/></svg></span><span class="tt" style="">Regis</span></div>
<div class="tab" style="left:1455px"><span class="ic" style="opacity:1"><svg width="16" height="16" viewBox="0 0 16 16" style="opacity:.85"><path d="M2 13c1-5 3-8 6-10 1 2 3 2 5 2-1 3 0 5 1 7-3-1-5 0-7 2-1-1-3-1-5-1z" fill="#b9b3a3"/><path d="M4 12c1-3 3-6 5-7M7 12c1-2 3-4 5-5" stroke="#8a8474" stroke-width="1" fill="none"/></svg></span><span class="tt" style="">Refer</span></div>
<div class="tab" style="left:1519px"><span class="ic" style="opacity:1"><svg width="16" height="16" viewBox="0 0 16 16" style=""><rect x="0" y="2.300" width="16" height="11.400" rx="3" fill="#ff0000"/><path d="M6.400 5.500v5l4.400-2.500z" fill="#fff"/></svg></span><span class="tt" style="">ortho</span></div>
<div class="tab" style="left:1583px"><span class="ic" style="opacity:1"><svg width="16" height="16" viewBox="0 0 16 16" style=""><rect x="0" y="2.300" width="16" height="11.400" rx="3" fill="#ff0000"/><path d="M6.400 5.500v5l4.400-2.500z" fill="#fff"/></svg></span><span class="tt" style="">more</span></div>
<div class="tab" style="left:1647px"><span class="ic" style="opacity:1"><svg width="16" height="16" viewBox="0 0 16 16" style=""><path d="M3.500 1.500h6l3 3v10h-9z" fill="none" stroke="#8c8c8c" stroke-width="1.100"/><path d="M9.500 1.500v3h3" fill="none" stroke="#8c8c8c" stroke-width="1.100"/></svg></span><span class="tt" style="">Index</span></div>
<i class="sep" style="left:47px"></i>
<i class="sep" style="left:111px"></i>
<i class="sep" style="left:175px"></i>
<i class="sep" style="left:239px"></i>
<i class="sep" style="left:303px"></i>
<i class="sep" style="left:367px"></i>
<i class="sep" style="left:431px"></i>
<i class="sep" style="left:495px"></i>
<i class="sep" style="left:559px"></i>
<i class="sep" style="left:623px"></i>
<i class="sep" style="left:687px"></i>
<i class="sep" style="left:751px"></i>
<i class="sep" style="left:815px"></i>
<i class="sep" style="left:879px"></i>
<i class="sep" style="left:943px"></i>
<i class="sep" style="left:1135px"></i>
<i class="sep" style="left:1199px"></i>
<i class="sep" style="left:1263px"></i>
<i class="sep" style="left:1327px"></i>
<i class="sep" style="left:1391px"></i>
<i class="sep" style="left:1455px"></i>
<i class="sep" style="left:1519px"></i>
<i class="sep" style="left:1583px"></i>
<i class="sep" style="left:1647px"></i>
<i class="sep" style="left:1711px"></i>
<svg class="abs" style="left:1718px;top:9px" width="14" height="14" viewBox="0 0 14 14"><path d="M7 0v14M0 7h14" stroke="#2b2b2b" stroke-width="1.300"/></svg>
<svg class="abs" style="left:1800px;top:15px" width="11" height="2" viewBox="0 0 11 2"><path d="M0 1h11" stroke="#8a8a8a" stroke-width="1.200"/></svg>
<svg class="abs" style="left:1845px;top:10px" width="12" height="12" viewBox="0 0 12 12"><rect x=".6" y="2.600" width="8.800" height="8.800" rx="1.500" fill="none" stroke="#8a8a8a" stroke-width="1.100"/><path d="M3 2.400V2a1.500 1.500 0 0 1 1.500-1.500H10A1.500 1.500 0 0 1 11.500 2v5.500A1.500 1.500 0 0 1 10 9h-.4" fill="none" stroke="#8a8a8a" stroke-width="1.100"/></svg>
<svg class="abs" style="left:1892px;top:10px" width="11" height="11" viewBox="0 0 11 11"><path d="M0.500 .5l10 10M10.500 .5l-10 10" stroke="#8a8a8a" stroke-width="1.200"/></svg>
</div>
<!-- ================= ADDRESS BAR ================= -->
<div id="addr">
<svg class="abs" style="left:19px;top:11px" width="18" height="16" viewBox="0 0 18 16"><path d="M17 8H2M8.500 1.500L2 8l6.500 6.500" fill="none" stroke="#1b1b1b" stroke-width="1.400" stroke-linecap="round" stroke-linejoin="round"/></svg>
<svg class="abs" style="left:63px;top:11px" width="18" height="16" viewBox="0 0 18 16"><path d="M1 8h15M9.500 1.500L16 8l-6.500 6.500" fill="none" stroke="#cfcfcf" stroke-width="1.400" stroke-linecap="round" stroke-linejoin="round"/></svg>
<svg class="abs" style="left:107px;top:10px" width="18" height="18" viewBox="0 0 18 18"><path d="M15.800 9.500a7 7 0 1 1-2.300-5.700" fill="none" stroke="#1b1b1b" stroke-width="1.400" stroke-linecap="round"/><path d="M14.800 1v4.300h-4.300" fill="none" stroke="#1b1b1b" stroke-width="1.400" stroke-linecap="round" stroke-linejoin="round"/></svg>
<svg class="abs" style="left:152px;top:10px" width="16" height="17" viewBox="0 0 16 17"><path d="M1.500 7.500L8 1.500l6.500 6v8h-4.300v-5a2.200 2.200 0 0 0-4.400 0v5H1.500z" fill="none" stroke="#1b1b1b" stroke-width="1.400" stroke-linejoin="round"/></svg>
<div id="url"><svg class="abs" style="left:15px;top:7px" width="13" height="16" viewBox="0 0 13 16"><rect x="1" y="6" width="11" height="9" rx="1.500" fill="none" stroke="#3a3a3a" stroke-width="1.200"/><path d="M3.500 6V4a3 3 0 0 1 6 0v2" fill="none" stroke="#3a3a3a" stroke-width="1.200"/><circle cx="6.500" cy="10.500" r="1" fill="#3a3a3a"/></svg><span class="abs" id="urltxt" style="left:44px;top:0"><span>https://</span><b>www.beamng.com</b><span>/threads/engine-sounds-exported-from-fl-studio-sounds-worse-in-beamng.81944/page-4</span></span></div>
<svg class="abs" style="left:1605px;top:10px" width="20" height="19" viewBox="0 0 20 19"><path d="M9 1.500l2.300 4.800 5.200.7-3.800 3.600M5.300 10.600L1.500 7l5.200-.7L9 1.500M5.300 10.600l-.9 5.200 3.800-2" fill="none" stroke="#3a3a3a" stroke-width="1.200" stroke-linejoin="round" stroke-linecap="round"/><circle cx="14" cy="13.500" r="4.200" fill="#3a3a3a"/><path d="M14 11.300v4.400M11.800 13.500h4.400" stroke="#fff" stroke-width="1.100"/></svg>
<svg class="abs" style="left:1652px;top:10px" width="20" height="18" viewBox="0 0 20 18"><ellipse cx="10" cy="8" rx="8.500" ry="7" fill="#2f9a3a"/><path d="M3 5c3-3 8-4 12-1-2 1-3 3-5 3S6 5 3 5z" fill="#7fd46a"/><path d="M2 10c3 2 6-1 9 1s5 1 7-1c-1 4-5 6-9 5S3 13 2 10z" fill="#1d5fb8"/><path d="M12 10l5 4-2 2-5-4z" fill="#f2c12e" stroke="#5a4a10" stroke-width=".6"/></svg>
<svg class="abs" style="left:1698px;top:10px" width="18" height="18" viewBox="0 0 18 18"><path d="M6.500 3.200a2 2 0 0 1 4 0v.9h3.300c.6 0 1 .5 1 1v3.100h-.9a2 2 0 0 0 0 4h.9v3c0 .6-.4 1-1 1h-3.100v-.8a2 2 0 0 0-4 0v.8H3.500c-.6 0-1-.4-1-1v-3.300h.8a2 2 0 0 0 0-4h-.8V5.100c0-.5.400-1 1-1h3z" fill="none" stroke="#1b1b1b" stroke-width="1.400" stroke-linejoin="round"/></svg>
<i class="abs" style="left:1731px;top:11px;width:1px;height:16px;background:#c8c8c8"></i>
<svg class="abs" style="left:1746px;top:10px" width="20" height="18" viewBox="0 0 20 18"><path d="M7.500 1.500l1.900 4 4.300.6-3.100 3 .7 4.300-3.800-2-3.800 2 .7-4.300-3.100-3 4.300-.6z" fill="none" stroke="#1b1b1b" stroke-width="1.400" stroke-linejoin="round"/><path d="M14.500 4.500H19M15 8.500h4M13 12.500h6" stroke="#1b1b1b" stroke-width="1.400" stroke-linecap="round"/></svg>
<svg class="abs" style="left:1791px;top:10px" width="18" height="18" viewBox="0 0 18 18"><rect x="4.500" y="4.500" width="12" height="12" rx="2.500" fill="none" stroke="#1b1b1b" stroke-width="1.400"/><path d="M3.200 13.300A2.500 2.500 0 0 1 1.500 11V4A2.500 2.500 0 0 1 4 1.500h7a2.500 2.500 0 0 1 2.300 1.600" fill="none" stroke="#1b1b1b" stroke-width="1.400" stroke-linecap="round"/><path d="M10.500 7.500v6M7.500 10.500h6" stroke="#1b1b1b" stroke-width="1.400" stroke-linecap="round"/></svg>
<svg class="abs" style="left:1833px;top:7px" width="26" height="26" viewBox="0 0 26 26"><clipPath id="avc"><circle cx="13" cy="13" r="12.500"/></clipPath><g clip-path="url(#avc)"><rect width="26" height="26" fill="#1a1a1e"/><path d="M0 20c6-3 18-3 26 0v6H0z" fill="#6fa3d6"/><path d="M7 22c1-8 3-12 6-12s5 4 6 12z" fill="#e8e4dc"/><circle cx="13" cy="8" r="4.500" fill="#f2efe8"/><circle cx="13" cy="8.500" r="2.200" fill="#403830"/><path d="M2 4l5 3M20 3l3 4" stroke="#555" stroke-width="1"/></g></svg>
<svg class="abs" style="left:1884px;top:18px" width="15" height="3" viewBox="0 0 15 3"><circle cx="1.500" cy="1.500" r="1.300" fill="#1b1b1b"/><circle cx="7.500" cy="1.500" r="1.300" fill="#1b1b1b"/><circle cx="13.500" cy="1.500" r="1.300" fill="#1b1b1b"/></svg>
</div>
<!-- ================= NOTEPAD++ ================= -->
<div id="npp">
<div class="abs" id="nt" style="left:4px;top:4px;width:938px;height:18px;background:linear-gradient(90deg,#000080 0%,#000a86 25%,#0a55b4 60%,#1084d0 100%)">
<svg class="abs" style="left:2px;top:1px" width="16" height="16" viewBox="0 0 16 16"><rect x="1" y="2.500" width="11" height="12.500" fill="#fff" stroke="#444" stroke-width=".8"/><rect x="1.500" y="9" width="10" height="5.500" fill="#6ac83a"/><path d="M2.500 1v3M4.500 1v3M6.500 1v3M8.500 1v3" stroke="#222" stroke-width="1"/><path d="M14 .5l1.500 1.500L8 13l-2.500 1 .5-2.500z" fill="#f4b02a" stroke="#8a5a10" stroke-width=".6"/><path d="M13.200 .8l1.800 1.800" stroke="#d82a2a" stroke-width="1.600"/></svg>
<div class="abs t" id="t_title" style="left:24px;top:0;font-weight:bold;font-size:13px;line-height:18px;color:#fff">F:\automate_tempo_export.py - Notepad++</div>
<div class="abs w95b" style="left:886px;top:2px;width:16px;height:14px"><i class="abs" style="left:3px;top:8px;width:6px;height:2px;background:#000"></i></div>
<div class="abs w95b" style="left:902px;top:2px;width:16px;height:14px"><i class="abs" style="left:2px;top:1px;width:9px;height:9px;border:1px solid #000;border-top-width:2px"></i></div>
<div class="abs w95b" style="left:920px;top:2px;width:16px;height:14px"><svg class="abs" style="left:3px;top:2px" width="8" height="7" viewBox="0 0 8 7"><path d="M0 0l7 7M7 0l-7 7" stroke="#000" stroke-width="1.700" transform="translate(.5 0)"/></svg></div>
</div>
<div class="abs" style="left:4px;top:23px;width:938px;height:20px;border:1px solid;border-color:#808080 transparent #808080 #808080;box-shadow:inset 1px 1px 0 #fff">
<span class="abs t mn" id="mn0" style="left:9px"><u>F</u>ile</span>
<span class="abs t mn" id="mn1" style="left:37px"><u>E</u>dit</span>
<span class="abs t mn" id="mn2" style="left:67.5px"><u>S</u>earch</span>
<span class="abs t mn" id="mn3" style="left:113px"><u>V</u>iew</span>
<span class="abs t mn" id="mn4" style="left:148px">E<u>n</u>coding</span>
<span class="abs t mn" id="mn5" style="left:205px"><u>L</u>anguage</span>
<span class="abs t mn" id="mn6" style="left:265px">Se<u>t</u>tings</span>
<span class="abs t mn" id="mn7" style="left:315px">T<u>o</u>ols</span>
<span class="abs t mn" id="mn8" style="left:353px"><u>M</u>acro</span>
<span class="abs t mn" id="mn9" style="left:395px"><u>R</u>un</span>
<span class="abs t mn" id="mn10" style="left:427px"><u>P</u>lugins</span>
<span class="abs t mn" id="mn11" style="left:473px"><u>W</u>indow</span>
<span class="abs t mn" id="mn12" style="left:524px"><u>?</u></span>
<svg class="abs" style="left:926px;top:4px" width="9" height="10" viewBox="0 0 10 10" preserveAspectRatio="none"><path d="M.5 .5l9 9M9.500 .5l-9 9" stroke="#000" stroke-width="1"/></svg>
</div>
<div class="abs" style="left:-626px;top:43px;width:0;height:0"><div class="abs" style="left:630px;top:0;width:937px;height:24px;border-top:1px solid #fff;border-bottom:1px solid #808080;border-right:1px solid #808080"></div>
<svg class="abs" style="left:634px;top:3px" width="16" height="16" viewBox="0 0 16 16"><path d="M3 1h7l3 3v11H3z" fill="#fff" stroke="#9a9a9a" stroke-width=".8"/><circle cx="12" cy="12.500" r="3" fill="#3aa635"/><path d="M12 10.800v3.400M10.300 12.500h3.400" stroke="#fff" stroke-width="1"/></svg>
<svg class="abs" style="left:657px;top:3px" width="16" height="16" viewBox="0 0 16 16"><path d="M8 0h5l3 3v8H8z" fill="#cfe0f7" stroke="#7a9fd6" stroke-width=".8"/><path d="M0 6h6l1 1.500h6V15H0z" fill="#f4c04e" stroke="#c88a1e" stroke-width=".8"/><path d="M1 10h12" stroke="#fbe3a0" stroke-width="1.500"/></svg>
<svg class="abs" style="left:680px;top:3px" width="16" height="16" viewBox="0 0 16 16"><path d="M1 1h14v14H1z" fill="#6e6e6e"/><rect x="4" y="2" width="8" height="4.500" fill="#c9c9c9"/><rect x="3.500" y="9" width="9" height="5" fill="#e9e9e9"/><rect x="5" y="10.500" width="6" height="2.500" fill="#8a8a8a"/></svg>
<svg class="abs" style="left:703px;top:3px" width="16" height="16" viewBox="0 0 16 16"><rect x="1" y="1" width="9" height="9" fill="#9fc0ee" stroke="#4a78c8" stroke-width=".8"/><rect x="3.500" y="3.500" width="9" height="9" fill="#9fc0ee" stroke="#4a78c8" stroke-width=".8"/><rect x="6" y="6" width="9" height="9" fill="#5f93e6" stroke="#2a58b8" stroke-width=".8"/><rect x="8" y="6.500" width="5" height="3" fill="#e8f0ff"/><rect x="8" y="11.500" width="5" height="3" fill="#9ad04a"/></svg>
<svg class="abs" style="left:727px;top:3px" width="16" height="16" viewBox="0 0 16 16"><path d="M2 1h8l3 3v11H2z" fill="#fff" stroke="#a8a8a8" stroke-width=".8"/><path d="M4 5h6M4 7.500h7M4 10h5" stroke="#b8b8b8" stroke-width="1"/><circle cx="11.500" cy="12.500" r="3" fill="#e8641e"/><path d="M9.800 12.500h3.400" stroke="#fff" stroke-width="1.200"/></svg>
<svg class="abs" style="left:749px;top:3px" width="16" height="16" viewBox="0 0 16 16"><path d="M1 1h6l2 2v8H1z" fill="#fff" stroke="#b0b0b0" stroke-width=".8"/><path d="M4 3h6l2 2v8H4z" fill="#fff" stroke="#b0b0b0" stroke-width=".8"/><circle cx="12" cy="12.500" r="3" fill="#e8641e"/><path d="M10.300 12.500h3.400" stroke="#fff" stroke-width="1.200"/></svg>
<svg class="abs" style="left:772px;top:3px" width="16" height="16" viewBox="0 0 16 16"><rect x="3.500" y="1" width="9" height="6" fill="#dbe8fb" stroke="#6a96d8" stroke-width=".8"/><rect x="1" y="6" width="14" height="6" rx="1.500" fill="#d8d8d8" stroke="#7a7a7a" stroke-width=".8"/><rect x="3.500" y="10" width="9" height="5" fill="#fff" stroke="#8a8a8a" stroke-width=".8"/></svg>
<i class="abs" style="left:795px;top:2px;width:2px;height:20px;border-left:1px solid #808080;border-right:1px solid #fff"></i>
<svg class="abs" style="left:803px;top:3px" width="16" height="16" viewBox="0 0 16 16"><path d="M9.500 1L6 9M11 2l-3 8" stroke="#555" stroke-width="1.600"/><circle cx="5" cy="11.500" r="2.300" fill="none" stroke="#555" stroke-width="1.500"/><circle cx="10" cy="12" r="2.300" fill="none" stroke="#555" stroke-width="1.500"/></svg>
<svg class="abs" style="left:826px;top:3px" width="16" height="16" viewBox="0 0 16 16"><rect x="1.500" y="1.500" width="8" height="9" fill="#8a8a8a" stroke="#555" stroke-width=".8"/><rect x="6" y="5.500" width="8" height="9" fill="#dcdcdc" stroke="#555" stroke-width=".8"/></svg>
<svg class="abs" style="left:849px;top:3px" width="16" height="16" viewBox="0 0 16 16"><rect x="1.500" y="2.500" width="10" height="12" rx="1" fill="#d89a3a" stroke="#9a6a1a" stroke-width=".8"/><rect x="4" y="1" width="5" height="3" fill="#9a9a9a"/><path d="M6.500 6h5l2.500 2.500V15h-7.500z" fill="#dfeafc" stroke="#6a8ac8" stroke-width=".8"/></svg>
<i class="abs" style="left:873px;top:2px;width:2px;height:20px;border-left:1px solid #808080;border-right:1px solid #fff"></i>
<svg class="abs" style="left:879px;top:3px" width="16" height="16" viewBox="0 0 16 16"><path d="M3 3.500h6.500a4 4 0 0 1 0 8H5" fill="none" stroke="#4caf3a" stroke-width="2.400"/><path d="M6.500 8L2 11.500 6.500 15z" fill="#4caf3a"/></svg>
<svg class="abs" style="left:903px;top:3px" width="16" height="16" viewBox="0 0 16 16"><path d="M13 11.500H6.500a4 4 0 0 1 0-8H10" fill="none" stroke="#6a6a6a" stroke-width="2.600"/><path d="M9.500 0L15 3.700 9.500 7.500z" fill="#6a6a6a"/></svg>
<i class="abs" style="left:927px;top:2px;width:2px;height:20px;border-left:1px solid #808080;border-right:1px solid #fff"></i>
<svg class="abs" style="left:933px;top:3px" width="16" height="16" viewBox="0 0 16 16"><rect x="1.500" y="5" width="5.500" height="9" rx="1" fill="#3a3a3a"/><rect x="9" y="5" width="5.500" height="9" rx="1" fill="#3a3a3a"/><rect x="3" y="2" width="3" height="4" fill="#555"/><rect x="10" y="2" width="3" height="4" fill="#555"/><rect x="6.500" y="7" width="3" height="3" fill="#666"/><rect x="2.500" y="9" width="3.500" height="3" fill="#9a9a9a"/><rect x="10" y="9" width="3.500" height="3" fill="#9a9a9a"/></svg>
<svg class="abs" style="left:957px;top:3px" width="16" height="16" viewBox="0 0 16 16"><path d="M1 7l3-6 .8 2.500L7 5z" fill="#2a6ad8"/><text x="1" y="8" font-family="Liberation Sans,sans-serif" font-size="8" font-weight="bold" fill="#1a4ab8">b</text><path d="M6 6l5 5" stroke="#3a7ae8" stroke-width="1.500"/><text x="8" y="15" font-family="Liberation Sans,sans-serif" font-size="9" font-weight="bold" fill="#2a6ad8">a</text><path d="M4 10v4h3" fill="none" stroke="#3a8ae8" stroke-width="1.300"/></svg>
<i class="abs" style="left:981px;top:2px;width:2px;height:20px;border-left:1px solid #808080;border-right:1px solid #fff"></i>
<svg class="abs" style="left:988px;top:3px" width="16" height="16" viewBox="0 0 16 16"><circle cx="6.500" cy="6" r="4.500" fill="#cfe4ff" stroke="#5a8ad8" stroke-width="1.300"/><path d="M6.500 3.800v4.400M4.300 6h4.400" stroke="#2f9a2f" stroke-width="1.400"/><path d="M10 9.500l4.500 4.500" stroke="#c8902a" stroke-width="2.200"/></svg>
<svg class="abs" style="left:1011px;top:3px" width="16" height="16" viewBox="0 0 16 16"><circle cx="6.500" cy="6" r="4.500" fill="#cfe4ff" stroke="#5a8ad8" stroke-width="1.300"/><path d="M4.300 6h4.400" stroke="#d83a2a" stroke-width="1.400"/><path d="M10 9.500l4.500 4.500" stroke="#d8502a" stroke-width="2.200"/></svg>
<i class="abs" style="left:1035px;top:2px;width:2px;height:20px;border-left:1px solid #808080;border-right:1px solid #fff"></i>
<svg class="abs" style="left:1042px;top:3px" width="16" height="16" viewBox="0 0 16 16"><rect x="1" y="2" width="9" height="8" fill="#fff" stroke="#5a7ab8" stroke-width="1"/><rect x="1" y="2" width="9" height="2" fill="#5a7ab8"/><rect x="6" y="6.500" width="9" height="8" fill="#f4d27a" stroke="#c89a2a" stroke-width="1"/><rect x="8.500" y="9.500" width="4" height="4" fill="#e8b040"/></svg>
<svg class="abs" style="left:1065px;top:3px" width="16" height="16" viewBox="0 0 16 16"><rect x="1" y="2" width="13" height="6" fill="#fff" stroke="#5a7ab8" stroke-width="1"/><rect x="1" y="2" width="13" height="2" fill="#5a7ab8"/><rect x="5" y="7.500" width="10" height="7" fill="#f4d27a" stroke="#c89a2a" stroke-width="1"/><rect x="8" y="10" width="4" height="3.500" fill="#e8b040"/></svg>
<i class="abs" style="left:1089px;top:2px;width:2px;height:20px;border-left:1px solid #808080;border-right:1px solid #fff"></i>
<svg class="abs" style="left:1096px;top:3px" width="16" height="16" viewBox="0 0 16 16"><path d="M1 3h13M1 6.500h6M1 10h5M1 13h4" stroke="#444" stroke-width="1.400"/><path d="M9 6.500h4.500v5H9" fill="none" stroke="#3a7ad8" stroke-width="1.500"/><path d="M10.500 9l-2.500 2.500 2.500 2.500z" fill="#3a7ad8"/></svg>
<svg class="abs" style="left:1118px;top:3px" width="16" height="16" viewBox="0 0 16 16"><path d="M12 2H7a3 3 0 0 0 0 6h1v6M11 2v12" fill="none" stroke="#5a9ae8" stroke-width="1.600"/><path d="M5 5a2.500 2.500 0 0 1 2.500-2.500H8V8h-.5A2.500 2.500 0 0 1 5 5z" fill="#5a9ae8"/></svg>
<svg class="abs" style="left:1142px;top:3px" width="16" height="16" viewBox="0 0 16 16"><path d="M4 2h11M7 5h8M7 8h8M4 11h11M7 14h5" stroke="#1a2ad8" stroke-width="1.400"/><path d="M2 0v16" stroke="#d82a2a" stroke-width="1" stroke-dasharray="1.500 1.500"/></svg>
<svg class="abs" style="left:1164px;top:3px" width="16" height="16" viewBox="0 0 16 16"><rect x="1" y="2" width="14" height="10" fill="#dbe8fb" stroke="#5a82c8" stroke-width="1"/><rect x="1" y="2" width="14" height="2.500" fill="#5a82c8"/><path d="M9 5L5 10h3l-1.500 5L12 8.500H8.500z" fill="#f4b02a" stroke="#b87a10" stroke-width=".6"/></svg>
<svg class="abs" style="left:1187px;top:3px" width="16" height="16" viewBox="0 0 16 16"><rect x=".5" y=".5" width="15" height="15" fill="#e8d88a" stroke="#6a6a3a" stroke-width="1"/><path d="M2 2l5 12M7 2l6 12M2 9l12-5" stroke="#d83a2a" stroke-width="1.300"/><path d="M9 2v12" stroke="#4a9a3a" stroke-width="1.300"/></svg>
<svg class="abs" style="left:1210px;top:3px" width="16" height="16" viewBox="0 0 16 16"><path d="M5 1h6l3 3v11H5z" fill="#fff" stroke="#a8a8a8" stroke-width=".8"/><path d="M1 14c2-1 3-3 3.500-6S5.500 2 8 2" fill="none" stroke="#d82a2a" stroke-width="2"/><path d="M2 7.500h5" stroke="#d82a2a" stroke-width="1.500"/><text x="8" y="14" font-family="Liberation Sans,sans-serif" font-size="6" fill="#666">{}</text></svg>
<svg class="abs" style="left:1234px;top:3px" width="16" height="16" viewBox="0 0 16 16"><path d="M1 3h5l1 1.500h8V14H1z" fill="#f8d8d8" stroke="#d86a6a" stroke-width="1"/><path d="M1 6h14" stroke="#e89a9a" stroke-width="1"/></svg>
<svg class="abs" style="left:1257px;top:3px" width="16" height="16" viewBox="0 0 16 16"><path d="M.5 8C3 3.500 13 3.500 15.500 8 13 12.500 3 12.500.5 8z" fill="#fff" stroke="#e8a05a" stroke-width="1.200"/><circle cx="8" cy="8" r="3.200" fill="#5a9ad8"/><circle cx="8" cy="8" r="1.400" fill="#223"/></svg>
<i class="abs" style="left:1281px;top:2px;width:2px;height:20px;border-left:1px solid #808080;border-right:1px solid #fff"></i>
<svg class="abs" style="left:1287px;top:3px" width="16" height="16" viewBox="0 0 16 16"><rect x="1.500" y="1.500" width="13" height="13" fill="#d8d8d8" stroke="#8a8a8a" stroke-width="1"/><circle cx="8" cy="8" r="3.300" fill="#d8101a"/></svg>
<svg class="abs" style="left:1311px;top:3px" width="16" height="16" viewBox="0 0 16 16"><rect x="1.500" y="1.500" width="13" height="13" fill="#d8d8d8" stroke="#8a8a8a" stroke-width="1"/><rect x="4.500" y="4.500" width="7" height="7" fill="#555"/></svg>
<svg class="abs" style="left:1334px;top:3px" width="16" height="16" viewBox="0 0 16 16"><rect x="1.500" y="1.500" width="13" height="13" fill="#d8d8d8" stroke="#8a8a8a" stroke-width="1"/><path d="M5.500 4v8l6-4z" fill="#555"/></svg>
<svg class="abs" style="left:1357px;top:3px" width="16" height="16" viewBox="0 0 16 16"><rect x="1.500" y="1.500" width="13" height="13" fill="#cfe0fb" stroke="#7a9ad8" stroke-width="1"/><path d="M3.500 4v8l4.500-4zM8 4v8l4.500-4z" fill="#2a5ae8"/></svg>
<svg class="abs" style="left:1380px;top:3px" width="16" height="16" viewBox="0 0 16 16"><rect x="1" y="1" width="11" height="11" fill="#555"/><path d="M2.500 3h8M2.500 5.500h3M7 5.500h3M2.500 8h3" stroke="#eee" stroke-width="1"/><rect x="7" y="7" width="8" height="8" fill="#777" stroke="#ddd" stroke-width=".8"/><rect x="9" y="7.500" width="4" height="2.500" fill="#ddd"/></svg>
</div>
<div class="abs" style="left:6px;top:70px;width:934px;height:23px;overflow:hidden">
</div>
<div class="abs itab" style="left:8px;top:71px;width:262px"></div>
<svg class="abs" style="left:12px;top:76px;opacity:0.85" width="12" height="13" viewBox="0 0 14 14" preserveAspectRatio="none"><rect width="14" height="14" fill="#4a4ab0"/><rect x="3" y="0" width="8" height="4.500" fill="#8080c8"/><rect x="2" y="8" width="10" height="6" fill="#8080c8"/><rect x="3.500" y="10" width="7" height="2.500" fill="#4a4ab0" opacity=".6"/></svg>
<span class="abs t tbt" id="t_tab1" style="left:27px;top:74px">I6_2_Enhanced_exhaust_muff.sfxBlend2D.json</span>
<svg class="abs" style="left:254px;top:77px" width="11" height="11" viewBox="0 0 11 11"><rect width="11" height="11" rx="1" fill="#cdcdcd"/><path d="M2.500 2.500l6 6M8.500 2.500l-6 6" stroke="#f4f4f4" stroke-width="1.800"/></svg>
<i class="abs" style="left:269px;top:71px;width:2px;height:21px;background:#000"></i>
<div class="abs itab" style="left:271px;top:71px;width:286px"></div>
<svg class="abs" style="left:275px;top:76px;opacity:0.85" width="12" height="13" viewBox="0 0 14 14" preserveAspectRatio="none"><rect width="14" height="14" fill="#4a4ab0"/><rect x="3" y="0" width="8" height="4.500" fill="#8080c8"/><rect x="2" y="8" width="10" height="6" fill="#8080c8"/><rect x="3.500" y="10" width="7" height="2.500" fill="#4a4ab0" opacity=".6"/></svg>
<span class="abs t tbt" id="t_tab2" style="left:290px;top:74px">V8_cross_Enhanced_exhaust_muff.sfxBlend2D.json</span>
<svg class="abs" style="left:542px;top:77px" width="11" height="11" viewBox="0 0 11 11"><rect width="11" height="11" rx="1" fill="#cdcdcd"/><path d="M2.500 2.500l6 6M8.500 2.500l-6 6" stroke="#f4f4f4" stroke-width="1.800"/></svg>
<div class="abs" style="left:557px;top:69px;width:171px;height:25px;background:#c0c0c0;border-left:1px solid #fff;border-right:2px solid #000;border-top:3px solid #faa23c"></div>
<svg class="abs" style="left:562px;top:76px;opacity:1" width="12" height="13" viewBox="0 0 14 14" preserveAspectRatio="none"><rect width="14" height="14" fill="#4a78d8"/><rect x="3" y="0" width="8" height="4.500" fill="#e8f0ff"/><rect x="2" y="8" width="10" height="6" fill="#e8f0ff"/><rect x="3.500" y="10" width="7" height="2.500" fill="#4a78d8" opacity=".6"/></svg>
<span class="abs t tbt" id="t_tab3" style="left:577px;top:74px;color:#000">automate_tempo_export.py</span>
<svg class="abs" style="left:710px;top:77px" width="11" height="11" viewBox="0 0 11 11"><rect width="11" height="11" rx="1" fill="#b4467a"/><path d="M2.500 2.500l6 6M8.500 2.500l-6 6" stroke="#fff" stroke-width="1.800"/></svg>
<div class="abs itab" style="left:729px;top:71px;width:157px"></div>
<svg class="abs" style="left:731px;top:76px;opacity:1" width="12" height="13" viewBox="0 0 14 14" preserveAspectRatio="none"><rect width="14" height="14" fill="#3c3cb4"/><rect x="3" y="0" width="8" height="4.500" fill="#7c7cd0"/><rect x="2" y="8" width="10" height="6" fill="#7c7cd0"/><rect x="3.500" y="10" width="7" height="2.500" fill="#3c3cb4" opacity=".6"/></svg>
<span class="abs t tbt" id="t_tab4" style="left:746px;top:74px">4c_exh2.sfxBlend2D.json</span>
<svg class="abs" style="left:870px;top:77px" width="11" height="11" viewBox="0 0 11 11"><rect width="11" height="11" rx="1" fill="#cdcdcd"/><path d="M2.500 2.500l6 6M8.500 2.500l-6 6" stroke="#f4f4f4" stroke-width="1.800"/></svg>
<i class="abs" style="left:885px;top:71px;width:2px;height:21px;background:#000"></i>
<div class="abs itab" style="left:887px;top:71px;width:19px"></div>
<svg class="abs" style="left:890px;top:76px;opacity:1" width="12" height="13" viewBox="0 0 14 14" preserveAspectRatio="none"><rect width="14" height="14" fill="#8a2a8a"/><rect x="3" y="0" width="8" height="4.500" fill="#b878c8"/><rect x="2" y="8" width="10" height="6" fill="#b878c8"/><rect x="3.500" y="10" width="7" height="2.500" fill="#8a2a8a" opacity=".6"/></svg>
<div class="abs w95b" style="left:906px;top:74px;width:16px;height:16px"><svg class="abs" style="left:5px;top:5px" width="3" height="5" viewBox="0 0 4 6"><path d="M3.500 0v6L.5 3z" fill="#000"/></svg></div>
<div class="abs w95b" style="left:923px;top:74px;width:16px;height:16px"><svg class="abs" style="left:6px;top:5px" width="3" height="5" viewBox="0 0 4 6"><path d="M.5 0v6l3-3z" fill="#000"/></svg></div>
<div class="abs" id="ned" style="left:6px;top:93px;width:933px;height:626px">
<div class="abs" id="nedc">
<i class="abs" style="left:0;top:0;width:52px;height:604px;background:#e4e4e4"></i>
<i class="abs" id="foldm" style="left:52px;top:0;width:14px;height:604px"></i>
<i class="abs" style="left:66px;top:126px;width:845px;height:18px;background:#e8e8ff"></i>
<span class="abs t ln" style="top:0px">1</span>
<span class="abs t cd" style="top:0px"><span class="k">import</span> pyautogui</span>
<span class="abs t ln" style="top:18px">2</span>
<span class="abs t cd" style="top:18px"><span class="k">import</span> time</span>
<span class="abs t ln" style="top:36px">3</span>
<span class="abs t ln" style="top:54px">4</span>
<span class="abs t cd" style="top:54px"><span class="c"># e.g. 1 / 96 of a beat = 1 / (16 steps per beat (in project settings)) * 1/6 step</span></span>
<span class="abs t ln" style="top:72px">5</span>
<span class="abs t cd" style="top:72px">fl_studio_note_length_in_beats <span class="o">=</span> <span class="n">1</span> <span class="o">/</span> <span class="n">96</span></span>
<span class="abs t ln" style="top:90px">6</span>
<span class="abs t ln" style="top:108px">7</span>
<span class="abs t cd" style="top:108px">min_rpm <span class="o">=</span> <span class="n">2350</span></span>
<span class="abs t ln" style="top:126px">8</span>
<span class="abs t cd" style="top:126px">max_rpm <span class="o">=</span> <span class="n">2350</span></span>
<span class="abs t ln" style="top:144px">9</span>
<span class="abs t cd" style="top:144px">rpm_increment <span class="o">=</span> <span class="n">350</span></span>
<span class="abs t ln" style="top:162px">10</span>
<span class="abs t ln" style="top:180px">11</span>
<span class="abs t cd" style="top:180px"><span class="c"># e.g. V6 = 3, V8 = 4</span></span>
<span class="abs t ln" style="top:198px">12</span>
<span class="abs t cd" style="top:198px">num_cylinders_fired_per_cycle <span class="o">=</span> <span class="n">1.5</span></span>
<span class="abs t ln" style="top:216px">13</span>
<span class="abs t ln" style="top:234px">14</span>
<span class="abs t ln" style="top:252px">15</span>
<span class="abs t cd" style="top:252px"><span class="c"># Any BPM divided by its coorelated RPM</span></span>
<span class="abs t ln" style="top:270px">16</span>
<span class="abs t cd" style="top:270px"><span class="c"># e.g. 42 BPM / 750 RPM</span></span>
<span class="abs t ln" style="top:288px">17</span>
<span class="abs t cd" style="top:288px">bpm_divide_rpm <span class="o">=</span> <span class="n">43.686</span> <span class="o">/</span> <span class="n">700</span></span>
<span class="abs t ln" style="top:306px">18</span>
<span class="abs t ln" style="top:324px">19</span>
<span class="abs t ln" style="top:342px">20</span>
<span class="abs t cd" style="top:342px"><span class="k">def</span> <span class="f">convertToTempo</span><span class="o">(</span>rpm<span class="o">):</span></span>
<span class="abs t ln" style="top:360px">21</span>
<span class="abs t cd" style="top:360px">    <span class="c">#return rpm * num_cylinders_fired_per_cycle * fl_studio_note_length_in_beats</span></span>
<span class="abs t ln" style="top:378px">22</span>
<span class="abs t cd" style="top:378px">    <span class="k">return</span> rpm <span class="o">*</span> bpm_divide_rpm <span class="c"># use for now</span></span>
<span class="abs t ln" style="top:396px">23</span>
<span class="abs t ln" style="top:414px">24</span>
<span class="abs t ln" style="top:432px">25</span>
<span class="abs t cd" style="top:432px"><span class="k">def</span> <span class="f">changeTempo</span><span class="o">(</span>tempo<span class="o">):</span></span>
<span class="abs t ln" style="top:450px">26</span>
<span class="abs t cd" style="top:450px">    <span class="c">#500, 20</span></span>
<span class="abs t ln" style="top:468px">27</span>
<span class="abs t cd" style="top:468px">    pyautogui<span class="o">.</span>moveTo<span class="o">(</span><span class="n">500</span><span class="o">,</span> <span class="n">20</span><span class="o">)</span> <span class="c"># move to tempo button</span></span>
<span class="abs t ln" style="top:486px">28</span>
<span class="abs t cd" style="top:486px">    time<span class="o">.</span>sleep<span class="o">(</span><span class="n">0.25</span><span class="o">)</span></span>
<span class="abs t ln" style="top:504px">29</span>
<span class="abs t cd" style="top:504px">    pyautogui<span class="o">.</span>click<span class="o">(</span>button<span class="o">=</span><span class="s">&#x27;right&#x27;</span><span class="o">)</span> <span class="c"># right click on tempo button</span></span>
<span class="abs t ln" style="top:522px">30</span>
<span class="abs t cd" style="top:522px">    time<span class="o">.</span>sleep<span class="o">(</span><span class="n">0.25</span><span class="o">)</span></span>
<span class="abs t ln" style="top:540px">31</span>
<span class="abs t cd" style="top:540px">    pyautogui<span class="o">.</span>hotkey<span class="o">(</span><span class="s">&#x27;alt&#x27;</span><span class="o">,</span> <span class="s">&#x27;t&#x27;</span><span class="o">)</span> <span class="c"># set value</span></span>
<span class="abs t ln" style="top:558px">32</span>
<span class="abs t cd" style="top:558px">    time<span class="o">.</span>sleep<span class="o">(</span><span class="n">0.25</span><span class="o">)</span></span>
<span class="abs t ln" style="top:576px">33</span>
<span class="abs t cd" style="top:576px">    pyautogui<span class="o">.</span>write<span class="o">(</span><span class="b">str</span><span class="o">(</span>tempo<span class="o">))</span> <span class="c"># write tempo value</span></span>
<span class="abs t ln" style="top:594px">34</span>
<span class="abs t cd" style="top:594px">    time<span class="o">.</span>sleep<span class="o">(</span><span class="n">0.25</span><span class="o">)</span></span>
<i class="abs" style="left:54px;top:346px;width:11px;height:11px;border:1px solid #808080;background:#fff"></i><i class="abs" style="left:57px;top:351px;width:5px;height:1px;background:#000"></i>
<i class="abs" style="left:59px;top:357px;width:7px;height:39px;border-left:1px solid #808080;border-bottom:1px solid #808080"></i>
<i class="abs" style="left:54px;top:436px;width:11px;height:11px;border:1px solid #808080;background:#fff"></i><i class="abs" style="left:57px;top:441px;width:5px;height:1px;background:#000"></i>
<i class="abs" style="left:59px;top:447px;width:1px;height:400px;background:#808080"></i>
</div>
<div class="abs chk" style="left:913px;top:2px;width:16px;height:604px"></div>
<div class="abs w95b" style="left:913px;top:2px;width:16px;height:16px"><svg class="abs" style="left:3px;top:5px" width="8" height="4" viewBox="0 0 8 4"><path d="M0 4h8L4 0z" fill="#000"/></svg></div>
<div class="abs w95b" style="left:913px;top:18px;width:16px;height:203px"></div>
<div class="abs w95b" style="left:913px;top:590px;width:16px;height:16px"><svg class="abs" style="left:3px;top:5px" width="8" height="4" viewBox="0 0 8 4"><path d="M0 0h8L4 4z" fill="#000"/></svg></div>
<div class="abs chk" style="left:2px;top:606px;width:911px;height:16px"></div>
<div class="abs w95b" style="left:2px;top:606px;width:16px;height:16px"><svg class="abs" style="left:4px;top:3px" width="4" height="8" viewBox="0 0 4 8"><path d="M4 0v8L0 4z" fill="#000"/></svg></div>
<div class="abs w95b" style="left:18px;top:606px;width:789px;height:16px"></div>
<div class="abs w95b" style="left:897px;top:606px;width:16px;height:16px"><svg class="abs" style="left:6px;top:3px" width="4" height="8" viewBox="0 0 4 8"><path d="M0 0v8l4-4z" fill="#000"/></svg></div>
<i class="abs" style="left:913px;top:606px;width:16px;height:16px;background:#c0c0c0"></i>
</div>
<i class="abs" style="left:4px;top:721px;width:938px;height:1px;background:#fff"></i>
<i class="abs" style="left:4px;top:24px;width:2px;height:696px;border-left:1px solid #808080;background:#fff"></i>
<i class="abs" style="left:941px;top:24px;width:1px;height:696px;background:#fff"></i>
<div class="abs sbp" style="left:5px;top:724px;width:172px;padding-left:2px"><span class="t" id="sb0">Python file</span></div>
<div class="abs sbp" style="left:179px;top:724px;width:218px;padding-left:4px"><span class="t" id="sb1">length : 1,461    lines : 61</span></div>
<div class="abs sbp" style="left:399px;top:724px;width:258px;padding-left:4px"><span class="t" id="sb2">Ln : 8    Col : 14    Pos : 190</span></div>
<div class="abs sbp" style="left:659px;top:724px;width:107px;padding-left:4px"><span class="t" id="sb3">Windows (CR LF)</span></div>
<div class="abs sbp" style="left:768px;top:724px;width:118px;padding-left:4px"><span class="t" id="sb4">UTF-8</span></div>
<div class="abs sbp" style="left:888px;top:724px;width:29px;padding-left:4px"><span class="t" id="sb5">INS</span></div>
<div class="abs sbp" style="left:919px;top:724px;width:22px;padding-left:4px"><span class="t" id="sb6"></span></div>
<svg class="abs" style="left:926px;top:728px" width="13" height="13" viewBox="0 0 13 13"><path d="M12 1L1 12M12 5L5 12M12 9l-3 3" stroke="#808080" stroke-width="1.200"/><path d="M13 1L2 12M13 5l-7 7M13 9l-3 3" stroke="#fff" stroke-width="1" transform="translate(-2 0)"/></svg>
</div>
<!-- ================= TASKBAR ================= -->
<div id="taskbar">
<div class="abs w95b" style="left:2px;top:3px;width:54px;height:23px"><svg class="abs" style="left:3px;top:3px" width="18" height="15" viewBox="0 0 18 15"><path d="M5 2c2-1.500 4-1 5.500 0s3.500 1.500 5.500 0v10c-2 1.500-4 1-5.500 0s-3.500-1.500-5.500 0z" fill="#111"/><path d="M6 2.800c1.500-1 3-.6 4 0v4.300c-1-.6-2.500-1-4 0z" fill="#e8281a"/><path d="M11 3.300c1.300.6 2.700.6 4-.2v4.300c-1.300.8-2.700.8-4 .2z" fill="#2ab02a"/><path d="M6 8.300c1.500-1 3-.6 4 0v3.500c-1-.6-2.500-1-4 0z" fill="#1a5ae8"/><path d="M11 8.800c1.300.6 2.700.6 4-.2v3.500c-1.300.8-2.700.8-4 .2z" fill="#f4d21a"/><path d="M1 3h2M0 5h3M1 7h2M0 9h3M1 11h2" stroke="#111" stroke-width="1"/><path d="M3 3.500h1.500M3 6h1.500M3 8.500h1.500M3 11h1.500" stroke="#e8281a" stroke-width="1"/></svg><span class="abs t" style="left:22px;top:2px;font-weight:bold;font-size:13px;line-height:16px;color:#000;letter-spacing:-.3px">Start</span></div>
<svg class="abs" style="left:66px;top:5px" width="17" height="18" viewBox="0 0 17 18"><circle cx="10.500" cy="6.500" r="5" fill="none" stroke="#fff" stroke-width="1.500"/><path d="M7 10.500L1 17" stroke="#fff" stroke-width="1.800" stroke-linecap="round"/></svg>
<svg class="abs" style="left:102px;top:5px" width="17" height="17" viewBox="0 0 17 17"><circle cx="8.500" cy="8.500" r="6.500" fill="none" stroke="#fff" stroke-width="2"/></svg>
<svg class="abs" style="left:137px;top:5px" width="18" height="17" viewBox="0 0 18 17"><path d="M1.500 1h10M1.500 15.500h10" stroke="#fff" stroke-width="1.300"/><rect x="1.500" y="4.500" width="10" height="7.500" fill="none" stroke="#fff" stroke-width="1.300"/><path d="M15 1v2M15 5.500v8" stroke="#fff" stroke-width="1.600"/></svg>
<svg class="abs" style="left:173px;top:6px" width="17" height="16" viewBox="0 0 17 16"><path d="M0 5.500L8.500 0 17 5.500V15a1 1 0 0 1-1 1H1a1 1 0 0 1-1-1z" fill="#0f5fb8"/><path d="M0 6l8.500 5.500L17 6v9a1 1 0 0 1-1 1H1a1 1 0 0 1-1-1z" fill="#2a9af0"/><path d="M0 15.500L8.500 10l8.500 5.500" fill="#5ab8f8"/></svg>
<svg class="abs" style="left:205px;top:5px" width="16" height="17" viewBox="0 0 16 17"><path d="M5 5V3.500a3 3 0 0 1 6 0V5" fill="none" stroke="#2a8ae8" stroke-width="1.300"/><rect x=".5" y="4.500" width="15" height="12" rx="2" fill="#f4f4f4" stroke="#d8d8d8" stroke-width=".6"/><rect x="4.500" y="7" width="3" height="3" fill="#f25022"/><rect x="8.500" y="7" width="3" height="3" fill="#7fba00"/><rect x="4.500" y="11" width="3" height="3" fill="#00a4ef"/><rect x="8.500" y="11" width="3" height="3" fill="#ffb900"/></svg>
<div class="abs tb" style="left:233px;width:68px"><span class="abs" style="left:4px;top:2px"><svg width="16" height="16" viewBox="0 0 16 16"><circle cx="8" cy="8" r="7.500" fill="#1a6fd0"/><path d="M1 9.500C1 5 4.500 1.500 9 1.500c3.500 0 6 2 6.500 5-1.500-2-4-2.500-6-2C7 5 5.500 7 6 9.500c.4 2.200 2.300 3.700 4.500 3.700 1.300 0 2.500-.4 3.500-1.200-1.200 2.200-3.500 3.500-6 3.500A6.500 6.500 0 0 1 1 9.500z" fill="#35c1f1"/><path d="M1.200 8C2 4.500 5 2 8.500 2c3 0 5.500 1.500 6.700 4C13.500 4.500 11 4 9 4.700 6.500 5.500 5.500 7.500 5.700 9.500 3.500 10 1.500 9.500 1.200 8z" fill="#5fe08a" opacity=".75"/></svg></span><span class="abs t" style="left:23px;top:2px">Engin...</span></div>
<div class="abs tb" style="left:303px;width:68px"><span class="abs" style="left:4px;top:2px"><svg width="16" height="16" viewBox="0 0 16 16"><path d="M2.500 1h8.500a1 1 0 0 1 1 1v12.500a.5.5 0 0 1-.5.5H3a.5.5 0 0 1-.5-.5z" fill="#fbe08a" stroke="#e8c45a" stroke-width=".6"/><path d="M11 9h2.500v5.500a.5.5 0 0 1-.5.5H11z" fill="#f4cf6a"/></svg></span><span class="abs t" style="left:23px;top:2px">wav</span></div>
<div class="abs tb" style="left:373px;width:65px"><span class="abs" style="left:4px;top:2px"><svg width="16" height="16" viewBox="0 0 16 16"><path d="M2.500 1h8.500a1 1 0 0 1 1 1v12.500a.5.5 0 0 1-.5.5H3a.5.5 0 0 1-.5-.5z" fill="#fbe08a" stroke="#e8c45a" stroke-width=".6"/><path d="M11 9h2.500v5.500a.5.5 0 0 1-.5.5H11z" fill="#f4cf6a"/></svg></span><span class="abs t" style="left:23px;top:2px">com...</span></div>
<div class="abs tb" style="left:440px;width:67px"><span class="abs" style="left:4px;top:2px"><svg width="16" height="16" viewBox="0 0 16 16"><path d="M2.500 1h8.500a1 1 0 0 1 1 1v12.500a.5.5 0 0 1-.5.5H3a.5.5 0 0 1-.5-.5z" fill="#fbe08a" stroke="#e8c45a" stroke-width=".6"/><path d="M11 9h2.500v5.500a.5.5 0 0 1-.5.5H11z" fill="#f4cf6a"/></svg></span><span class="abs t" style="left:23px;top:2px">coupe</span></div>
<div class="abs tb" style="left:509px;width:67px"><span class="abs" style="left:4px;top:2px"><svg width="16" height="16" viewBox="0 0 16 16"><path d="M2.500 1h8.500a1 1 0 0 1 1 1v12.500a.5.5 0 0 1-.5.5H3a.5.5 0 0 1-.5-.5z" fill="#fbe08a" stroke="#e8c45a" stroke-width=".6"/><path d="M11 9h2.500v5.500a.5.5 0 0 1-.5.5H11z" fill="#f4cf6a"/></svg></span><span class="abs t" style="left:23px;top:2px">auda...</span></div>
<div class="abs tb" style="left:578px;width:66px"><span class="abs" style="left:4px;top:2px"><svg width="16" height="16" viewBox="0 0 16 16"><rect x=".5" y="2" width="15" height="12" fill="#fff" stroke="#6a6a6a" stroke-width="1"/><rect x="2.500" y="5" width="5" height="6.500" fill="#1a6ad8"/><path d="M9 5.500h5M9 8h5M9 10.500h5" stroke="#8a8a8a" stroke-width="1"/></svg></span><span class="abs t" style="left:23px;top:2px">Data ...</span></div>
<div class="abs tb" style="left:646px;width:67px"><span class="abs" style="left:4px;top:2px"><svg width="16" height="16" viewBox="0 0 16 16"><path d="M5.500 0h5v7H15l-7 8.500L1 7h4.500z" fill="#2a8ae8"/></svg></span><span class="abs t" style="left:23px;top:2px">Dow...</span></div>
<div class="abs tb" style="left:715px;width:67px"><span class="abs" style="left:4px;top:2px"><svg width="16" height="16" viewBox="0 0 16 16"><path d="M2.500 1h8.500a1 1 0 0 1 1 1v12.500a.5.5 0 0 1-.5.5H3a.5.5 0 0 1-.5-.5z" fill="#fbe08a" stroke="#e8c45a" stroke-width=".6"/><path d="M11 9h2.500v5.500a.5.5 0 0 1-.5.5H11z" fill="#f4cf6a"/></svg></span><span class="abs t" style="left:23px;top:2px">engine</span></div>
<div class="abs tb" style="left:784px;width:67px"><span class="abs" style="left:4px;top:2px"><svg width="16" height="16" viewBox="0 0 16 16"><path d="M2.500 1h8.500a1 1 0 0 1 1 1v12.500a.5.5 0 0 1-.5.5H3a.5.5 0 0 1-.5-.5z" fill="#fbe08a" stroke="#e8c45a" stroke-width=".6"/><path d="M11 9h2.500v5.500a.5.5 0 0 1-.5.5H11z" fill="#f4cf6a"/></svg></span><span class="abs t" style="left:23px;top:2px">Proje...</span></div>
<div class="abs tb" style="left:853px;width:66px"><span class="abs" style="left:4px;top:2px"><svg width="16" height="16" viewBox="0 0 16 16"><path d="M2.500 1h8.500a1 1 0 0 1 1 1v12.500a.5.5 0 0 1-.5.5H3a.5.5 0 0 1-.5-.5z" fill="#fbe08a" stroke="#e8c45a" stroke-width=".6"/><path d="M11 9h2.500v5.500a.5.5 0 0 1-.5.5H11z" fill="#f4cf6a"/></svg></span><span class="abs t" style="left:23px;top:2px">1-2-3...</span></div>
<div class="abs tb" style="left:921px;width:67px"><span class="abs" style="left:4px;top:2px"><svg width="16" height="16" viewBox="0 0 16 16"><circle cx="8" cy="8" r="8" fill="#5865f2"/><path d="M4 10.500c0-2 .6-4 1.300-5 .7-.5 1.500-.8 2.300-.9l.3.500h.2l.3-.5c.8.1 1.600.4 2.300.9.700 1 1.300 3 1.300 5-.7.800-1.700 1.200-2.700 1.300l-.5-.9c.3-.1.600-.3.900-.5-1.500.7-3.300.7-4.800 0 .3.200.6.400.9.500l-.5.900c-1-.1-2-.5-2.700-1.300z" fill="#fff"/><circle cx="6.300" cy="9" r=".9" fill="#5865f2"/><circle cx="9.700" cy="9" r=".9" fill="#5865f2"/></svg></span><span class="abs t" style="left:23px;top:2px">other...</span></div>
<div class="abs tb" style="left:992px;width:67px;background:#ffb400"><span class="abs" style="left:4px;top:2px"><svg width="16" height="16" viewBox="0 0 16 16"><ellipse cx="8" cy="9" rx="6.500" ry="6.800" fill="#e8641e"/><ellipse cx="6" cy="7.500" rx="2.500" ry="3.500" fill="#f8a04a" opacity=".8"/><path d="M8 3c0-1.500 1-2.500 3-3-.5 1.500-1 2.500-3 3z" fill="#4a9a2a"/><ellipse cx="8" cy="9" rx="6.500" ry="6.800" fill="none" stroke="#3a2a1a" stroke-width=".9"/></svg></span><span class="abs t" style="left:23px;top:2px">Rend...</span></div>
<div class="abs tb" style="left:1063px;width:66px"><span class="abs" style="left:4px;top:2px"><svg width="16" height="16" viewBox="0 0 16 16"><rect x="6" y="1" width="6" height="6" fill="#f4b02a" stroke="#b87a10" stroke-width=".6"/><rect x="1" y="6" width="4" height="4" fill="#d8321a" stroke="#8a1a0a" stroke-width=".6"/><rect x="7.500" y="9.500" width="5" height="5" fill="#5a9ae8" stroke="#2a5ab8" stroke-width=".6"/></svg></span><span class="abs t" style="left:23px;top:2px">Soun...</span></div>
<div class="abs tb tbp" style="left:1131px;width:68px"><span class="abs" style="left:4px;top:2px"><svg width="16" height="16" viewBox="0 0 16 16"><rect x="1" y="2.500" width="11" height="12.500" fill="#fff" stroke="#444" stroke-width=".8"/><rect x="1.500" y="9" width="10" height="5.500" fill="#6ac83a"/><path d="M2.500 1v3M4.500 1v3M6.500 1v3M8.500 1v3" stroke="#222" stroke-width="1"/><path d="M14 .5l1.500 1.500L8 13l-2.500 1 .5-2.500z" fill="#f4b02a" stroke="#8a5a10" stroke-width=".6"/><path d="M13.200 .8l1.800 1.800" stroke="#d82a2a" stroke-width="1.600"/></svg></span><span class="abs t" style="left:23px;top:2px">F:\a...</span></div>
<div class="abs tb" style="left:1202px;width:66px"><span class="abs" style="left:4px;top:2px"><svg width="16" height="16" viewBox="0 0 16 16"><rect x="3" y="1.500" width="12" height="9" fill="#eaf4ff" stroke="#6a8ab8" stroke-width="1"/><path d="M4 7l2.500-3 2 3 2-2.500 2 2 1.500-1" fill="none" stroke="#1a7ad8" stroke-width="1.200"/><rect x="1" y="6" width="2" height="9" fill="#8a8a8a"/><path d="M6 13h7M9 10.500v2.500" stroke="#6a6a6a" stroke-width="1.200"/><circle cx="2" cy="5" r="1" fill="#2aa82a"/></svg></span><span class="abs t" style="left:23px;top:2px">Task ...</span></div>
<div class="abs tb" style="left:1271px;width:66px"><span class="abs" style="left:4px;top:2px"><svg width="16" height="16" viewBox="0 0 16 16"><path d="M3 5.500h2.500L9 1.500v13L5.500 10.500H3z" fill="#9a9a9a"/><path d="M10 2v12" stroke="#c8c8c8" stroke-width="1.500"/><path d="M3 5.500h2.500L9 1.500" fill="none" stroke="#6a6a6a" stroke-width=".6"/></svg></span><span class="abs t" style="left:23px;top:2px">Sound</span></div>
<div class="abs tb" style="left:1340px;width:66px"><span class="abs" style="left:4px;top:2px"><svg width="16" height="16" viewBox="0 0 16 16"><circle cx="8" cy="9" r="5.500" fill="#f4d22a"/><path d="M4 9.500l1-2 1 3.500 1-5 1 6 1-4.500 1 3 1-2" fill="none" stroke="#d8321a" stroke-width="1"/><path d="M1.500 11V8a6.500 6.500 0 0 1 13 0v3" fill="none" stroke="#1a2ad8" stroke-width="2"/><rect x=".5" y="8.500" width="3" height="5.500" rx="1" fill="#1a2ad8"/><rect x="12.500" y="8.500" width="3" height="5.500" rx="1" fill="#1a2ad8"/></svg></span><span class="abs t" style="left:23px;top:2px">Euro_...</span></div>
<div class="abs tb" style="left:1408px;width:67px"><span class="abs" style="left:4px;top:2px"><svg width="16" height="16" viewBox="0 0 16 16"><circle cx="8" cy="8" r="8" fill="#1b2838"/><circle cx="10.500" cy="6" r="2.800" fill="none" stroke="#fff" stroke-width="1.200"/><circle cx="10.500" cy="6" r="1.200" fill="#fff"/><path d="M0 8.500l5 2 3-2.500 1 2-3 2.500z" fill="#fff"/><circle cx="5.300" cy="11.300" r="2" fill="#fff"/><circle cx="5.300" cy="11.300" r="1" fill="#1b2838"/></svg></span><span class="abs t" style="left:23px;top:2px">Steam</span></div>
<div class="abs tb" style="left:1477px;width:67px"><span class="abs" style="left:4px;top:2px"><svg width="16" height="16" viewBox="0 0 16 16"><rect x="2.500" y="1" width="11" height="11" fill="#eaf2ff" stroke="#5a82c8" stroke-width="1"/><text x="4" y="8" font-family="Liberation Sans,sans-serif" font-size="7" font-weight="bold" fill="#e8641e">A</text><path d="M9 4h3M9 6h3M4.500 9.500h7.500" stroke="#5a82c8" stroke-width="1"/><path d="M1 13.500h14v1.500H1z" fill="#8aa8d8"/></svg></span><span class="abs t" style="left:23px;top:2px">coup...</span></div>
<div class="abs tb" style="left:1546px;width:67px"><span class="abs" style="left:4px;top:2px"><svg width="16" height="16" viewBox="0 0 16 16"><path d="M4.500 8L11.500 4.200 13.200 12.600z" fill="none" stroke="#222" stroke-width="1"/><circle cx="4.600" cy="8" r="4.300" fill="#ff6600"/><circle cx="11.600" cy="3.600" r="2.400" fill="#ff6600"/><circle cx="13" cy="12.600" r="2.600" fill="#ff6600"/></svg></span><span class="abs t" style="left:23px;top:2px">Bea...</span></div>
<div class="abs tb" style="left:1615px;width:67px"><span class="abs" style="left:4px;top:2px"><svg width="16" height="16" viewBox="0 0 16 16"><rect x="2.500" y=".5" width="11" height="15" rx="1" fill="#5a6a8a" stroke="#3a4a6a" stroke-width=".8"/><rect x="4" y="2" width="8" height="3" fill="#e8f0ff"/><g fill="#e8e8f0"><rect x="4" y="6.500" width="2" height="2"/><rect x="7" y="6.500" width="2" height="2"/><rect x="10" y="6.500" width="2" height="2"/><rect x="4" y="9.500" width="2" height="2"/><rect x="7" y="9.500" width="2" height="2"/><rect x="10" y="9.500" width="2" height="2"/><rect x="4" y="12.500" width="2" height="2"/><rect x="7" y="12.500" width="2" height="2"/><rect x="10" y="12.500" width="2" height="2"/></g></svg></span><span class="abs t" style="left:23px;top:2px">Calc...</span></div>
<div class="abs" style="left:1687px;top:3px;width:236px;height:23px;border:1px solid;border-color:#808080 #fff #fff #808080"></div>
<svg class="abs" style="left:1692px;top:9px" width="8" height="10" viewBox="0 0 8 10"><path d="M1 4.500L4 1.500l3 3M1 9L4 6l3 3" fill="none" stroke="#000" stroke-width="1.400"/></svg>
<svg class="abs" style="left:1712px;top:6px" width="17" height="16" viewBox="0 0 17 16"><path d="M1 5.500h2.500L7.500 2v12L3.500 10.500H1z" fill="none" stroke="#f4f4f4" stroke-width="1.200" stroke-linejoin="round"/><path d="M10 5.500a3.500 3.500 0 0 1 0 5M12 3.500a6 6 0 0 1 0 9" fill="none" stroke="#f4f4f4" stroke-width="1.200"/><path d="M14 1.500a9 9 0 0 1 0 13" fill="none" stroke="#d8d8d8" stroke-width="1"/></svg>
<svg class="abs" style="left:1739px;top:7px" width="15" height="15" viewBox="0 0 15 15"><path d="M1 8A10 10 0 0 1 12 1M3 11a7 7 0 0 1 8-7M5.500 13a4 4 0 0 1 5-5.500" fill="none" stroke="#f4f4f4" stroke-width="1.300"/><circle cx="11.500" cy="12.500" r="1.500" fill="#f4f4f4"/></svg>
<svg class="abs" style="left:1763px;top:5px" width="13" height="17" viewBox="0 0 13 17"><rect x="1" y="4" width="8" height="9" rx="1.500" fill="none" stroke="#f4f4f4" stroke-width="1.200"/><path d="M9 7l3-2v7l-3-2" fill="none" stroke="#f4f4f4" stroke-width="1.200"/><path d="M2 2c2-1.500 6-1.500 8 0M2 15c2 1.500 6 1.500 8 0" fill="none" stroke="#e4e4e4" stroke-width="1"/></svg>
<span class="abs t" style="left:1790px;top:6px;font-size:12px;line-height:16px;color:#222">4:55 PM</span>
<svg class="abs" style="left:1853px;top:5px" width="18" height="17" viewBox="0 0 18 17"><path d="M1 1h16v11h-6l-2.500 3.500L6 12H1z" fill="none" stroke="#fff" stroke-width="1.200"/></svg>
<span class="abs" style="left:1896px;top:6px"><svg width="16" height="16" viewBox="0 0 16 16"><rect x="1" y="2.500" width="11" height="12.500" fill="#fff" stroke="#444" stroke-width=".8"/><rect x="1.500" y="9" width="10" height="5.500" fill="#6ac83a"/><path d="M2.500 1v3M4.500 1v3M6.500 1v3M8.500 1v3" stroke="#222" stroke-width="1"/><path d="M14 .5l1.500 1.500L8 13l-2.500 1 .5-2.500z" fill="#f4b02a" stroke="#8a5a10" stroke-width=".6"/><path d="M13.200 .8l1.800 1.800" stroke="#d82a2a" stroke-width="1.600"/></svg></span>
</div>
</body>
</html>
